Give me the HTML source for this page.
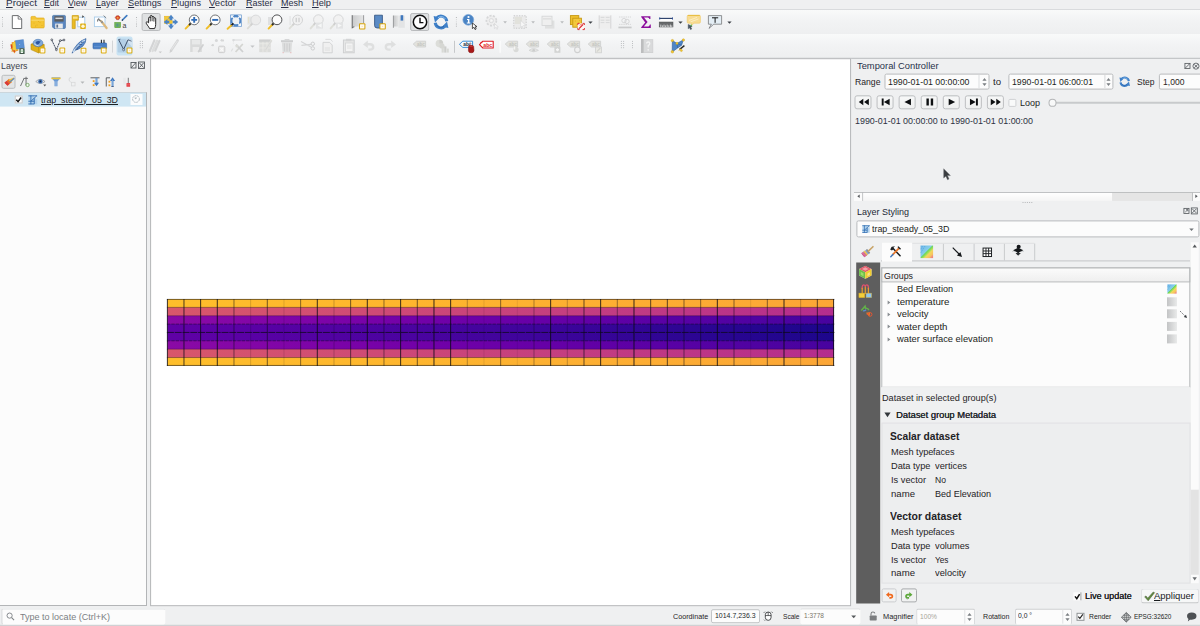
<!DOCTYPE html>
<html><head><meta charset="utf-8"><title>QGIS</title>
<style>
html,body{margin:0;padding:0;}
html{overflow:hidden;}
body{width:1200px;height:626px;overflow:hidden;position:relative;background:#eff0f1;font-family:"Liberation Sans",sans-serif;}
.t{position:absolute;white-space:nowrap;line-height:14px;height:14px;transform-origin:0 50%;}
.i{position:absolute;overflow:visible;}
u{text-decoration-thickness:0.8px;text-underline-offset:1px;}
</style></head><body>
<div style="position:absolute;left:0;top:0;transform:translate(0.00px,9.80px);width:1200.00px;height:24.20px;background:linear-gradient(180deg,#f9fafa,#f2f3f4 45%,#eeeff0);"></div>
<div style="position:absolute;left:0;top:0;transform:translate(0.00px,34.00px);width:1200.00px;height:23.80px;background:linear-gradient(180deg,#f9fafa,#f2f3f4 45%,#eeeff0);"></div>
<div style="position:absolute;left:0;top:0;transform:translate(0.00px,9.00px);width:1200.00px;height:0.90px;background:#d9dbdd;"></div>
<div style="position:absolute;left:0;top:0;transform:translate(0.00px,57.80px);width:1200.00px;height:1.00px;background:#babcbe;"></div>
<span class="t" style="left:5.5px;top:-4.0px;font-size:8.80px;color:#2a2f45;transform:scaleX(1.1319);"><u>P</u>roject</span>
<span class="t" style="left:43.5px;top:-4.0px;font-size:8.80px;color:#2a2f45;transform:scaleX(0.9892);"><u>E</u>dit</span>
<span class="t" style="left:67.5px;top:-4.0px;font-size:8.80px;color:#2a2f45;transform:scaleX(1.0045);"><u>V</u>iew</span>
<span class="t" style="left:95.5px;top:-4.0px;font-size:8.80px;color:#2a2f45;transform:scaleX(1.0222);"><u>L</u>ayer</span>
<span class="t" style="left:127.5px;top:-4.0px;font-size:8.80px;color:#2a2f45;transform:scaleX(1.0536);"><u>S</u>ettings</span>
<span class="t" style="left:170.5px;top:-4.0px;font-size:8.80px;color:#2a2f45;transform:scaleX(1.0395);"><u>P</u>lugins</span>
<span class="t" style="left:208.5px;top:-4.0px;font-size:8.80px;color:#2a2f45;transform:scaleX(1.0823);"><u>V</u>ector</span>
<span class="t" style="left:245.5px;top:-4.0px;font-size:8.80px;color:#2a2f45;transform:scaleX(1.0225);"><u>R</u>aster</span>
<span class="t" style="left:280.5px;top:-4.0px;font-size:8.80px;color:#2a2f45;transform:scaleX(1.0224);"><u>M</u>esh</span>
<span class="t" style="left:311.5px;top:-4.0px;font-size:8.80px;color:#2a2f45;transform:scaleX(1.0499);"><u>H</u>elp</span>
<div style="position:absolute;left:0;top:0;transform:translate(2.00px,17.00px);width:1.10px;height:1.10px;background:#b4b6b8;opacity:1;"></div>
<div style="position:absolute;left:0;top:0;transform:translate(2.00px,19.17px);width:1.10px;height:1.10px;background:#b4b6b8;opacity:0.45;"></div>
<div style="position:absolute;left:0;top:0;transform:translate(2.00px,21.34px);width:1.10px;height:1.10px;background:#b4b6b8;opacity:0.45;"></div>
<div style="position:absolute;left:0;top:0;transform:translate(2.00px,23.51px);width:1.10px;height:1.10px;background:#b4b6b8;opacity:1;"></div>
<div style="position:absolute;left:0;top:0;transform:translate(2.00px,25.68px);width:1.10px;height:1.10px;background:#b4b6b8;opacity:1;"></div>
<div style="position:absolute;left:0;top:0;transform:translate(2.00px,40.90px);width:1.10px;height:1.10px;background:#bdbfc1;"></div>
<div style="position:absolute;left:0;top:0;transform:translate(2.00px,43.00px);width:1.10px;height:1.10px;background:#bdbfc1;"></div>
<div style="position:absolute;left:0;top:0;transform:translate(2.00px,45.10px);width:1.10px;height:1.10px;background:#bdbfc1;"></div>
<div style="position:absolute;left:0;top:0;transform:translate(2.00px,47.20px);width:1.10px;height:1.10px;background:#bdbfc1;"></div>
<div style="position:absolute;left:0;top:0;transform:translate(141.60px,13.00px);width:19.30px;height:18.20px;background:#dfe1e2;border:0.8px solid #b9bbbd;border-radius:2px;box-sizing:border-box;"></div>
<div style="position:absolute;left:0;top:0;transform:translate(410.20px,13.00px);width:19.40px;height:18.20px;background:#dfe1e2;border:0.8px solid #b9bbbd;border-radius:2px;box-sizing:border-box;"></div>
<div style="position:absolute;left:0;top:0;transform:translate(116.50px,36.50px);width:16.00px;height:18.50px;background:#c9e3f3;border-radius:2px;"></div>
<svg class="i" style="left:9.0px;top:13.7px;" width="16" height="16" viewBox="0 0 16 16"><path d="M3.3 1.6H9.4L12.7 4.9V14.5H3.3Z" fill="#fff" stroke="#6b6d6f" stroke-width="1"/><path d="M9.2 1.8V5.1H12.5" fill="none" stroke="#6b6d6f" stroke-width="0.9"/></svg>
<svg class="i" style="left:29.5px;top:13.7px;" width="16" height="16" viewBox="0 0 16 16"><path d="M1 3.3Q1 2.4 1.9 2.4H5.2L6.4 4H13.4Q14.2 4 14.2 4.8V13Q14.2 13.9 13.4 13.9H1.9Q1 13.9 1 13Z" fill="#f4c534" stroke="#e3ad1e" stroke-width="0.7"/><path d="M1.3 6.2H14" stroke="#f9dc7a" stroke-width="0.9"/><g fill="#e2a91c"><circle cx="4" cy="9" r=".5"/><circle cx="7" cy="11" r=".5"/><circle cx="10" cy="8.5" r=".5"/><circle cx="12" cy="11.5" r=".5"/><circle cx="5.5" cy="12" r=".5"/><circle cx="8.5" cy="7.5" r=".5"/></g></svg>
<svg class="i" style="left:50.5px;top:13.7px;" width="16" height="16" viewBox="0 0 16 16"><path d="M1.6 2.3Q1.6 1.4 2.5 1.4H13.4Q14.4 1.4 14.4 2.3V13.6Q14.4 14.5 13.4 14.5H3L1.6 13.1Z" fill="#5c88c2" stroke="#44709f" stroke-width="0.7"/><rect x="3.4" y="2.2" width="9.2" height="5.4" fill="#5b5d5f"/><rect x="4.4" y="3.6" width="7.2" height="1.5" fill="#d9dadb"/><rect x="4.2" y="9.6" width="7.6" height="4.9" fill="#e9eaeb"/><rect x="5.4" y="10.6" width="1.7" height="3" fill="#5b6f8c"/></svg>
<svg class="i" style="left:71.0px;top:13.7px;" width="16" height="16" viewBox="0 0 16 16"><rect x="6.8" y="3.2" width="7" height="9.6" fill="#fff" stroke="#9fc3e4" stroke-width="0.8"/><path d="M1.2 1.6H7.4V6.2H4.2V14.6H1.2Z" fill="#ebbb22" stroke="#c7990e" stroke-width="0.7"/><rect x="2" y="2.6" width="4.6" height="2.2" fill="#f8de86"/><path d="M11.2 1.2L13.2 2.6L11.2 4Z" fill="#4a4c4e"/><rect x="9.2" y="9.4" width="5.6" height="5.6" rx="0.8" fill="#e0b116"/><circle cx="12" cy="12.2" r="1.7" fill="#fff6d8"/></svg>
<svg class="i" style="left:93.0px;top:13.7px;" width="16" height="16" viewBox="0 0 16 16"><rect x="1.4" y="3" width="10.6" height="9.6" fill="#fdfeff" stroke="#a9cdea" stroke-width="0.9"/><path d="M5.2 5.2L8.6 7.6" stroke="#777a7c" stroke-width="1.6"/><path d="M4.6 7.6Q3.8 5.2 6.2 4.4" fill="none" stroke="#777a7c" stroke-width="1"/><path d="M8.4 7.4L13.6 14" stroke="#dcb87c" stroke-width="2.3" stroke-linecap="round"/><path d="M8.4 7.4L9.6 8.9" stroke="#8e9092" stroke-width="2"/><path d="M10.6 1.6L13.2 4" stroke="#55585a" stroke-width="0.7"/></svg>
<svg class="i" style="left:112.5px;top:13.7px;" width="16" height="16" viewBox="0 0 16 16"><path d="M2.2 3.6L3.6 1.8H5.8L7.2 3.6L5.8 5.6H3.6Z" fill="#d8442c" stroke="#a8301c" stroke-width="0.5"/><circle cx="4.7" cy="3.7" r="1" fill="#f2a23a"/><path d="M9.4 6L13.8 1.6" stroke="#3f7cc2" stroke-width="1.7" stroke-linecap="round"/><path d="M9 6.6L9.8 5.6" stroke="#2b3a55" stroke-width="1.2"/><rect x="1.8" y="8.6" width="5.6" height="5" fill="#7fc04a" stroke="#4d9a2c" stroke-width="0.6"/><path d="M3.2 9.4V12.8M4.6 9.4V12.8M6 9.4V12.8" stroke="#3f7fae" stroke-width="0.7"/><text x="9.6" y="13.6" font-family="Liberation Sans,sans-serif" font-size="7" fill="#3c3e40">a</text></svg>
<svg class="i" style="left:143.6px;top:13.7px;" width="16" height="16" viewBox="0 0 16 16"><path d="M4.6 8.8V4.2Q4.6 3.2 5.5 3.2Q6.3 3.2 6.3 4.2V2.4Q6.3 1.4 7.2 1.4Q8.1 1.4 8.1 2.4V3.2Q8.1 2.4 9 2.4Q9.9 2.4 9.9 3.4V4.4Q9.9 3.7 10.8 3.7Q11.7 3.7 11.7 4.8V10.4Q11.7 12.6 10.6 14.6H5.6Q4.8 12.8 3.4 11.2L2.2 9.2Q1.8 8.2 2.7 7.9Q3.4 7.7 4 8.4Z" fill="#fff" stroke="#1a1a1a" stroke-width="0.95" stroke-linejoin="round"/><path d="M6.3 4.2V7.4M8.1 3.2V7.2M9.9 4.4V7.6" stroke="#1a1a1a" stroke-width="0.8"/></svg>
<svg class="i" style="left:163.0px;top:13.7px;" width="16" height="16" viewBox="0 0 16 16"><rect x="1.4" y="2.2" width="7.4" height="7.4" fill="#f5c936" stroke="#dfb226" stroke-width="0.5"/><g fill="#4b84c6"><path d="M8 0.8L11 4.4H9.3V6.6H6.7V4.4H5Z"/><path d="M8 15.2L11 11.6H9.3V9.4H6.7V11.6H5Z"/><path d="M0.8 8L4.4 5V6.7H6.6V9.3H4.4V11Z"/><path d="M15.2 8L11.6 5V6.7H9.4V9.3H11.6V11Z"/></g><rect x="6.5" y="6.5" width="3" height="3" fill="#f5c936"/></svg>
<svg class="i" style="left:184.0px;top:13.7px;" width="16" height="16" viewBox="0 0 16 16"><path d="M5.63 10.52L1.60 14.60" stroke="#f0be28" stroke-width="1.9" stroke-linecap="round"/><path d="M6.76 9.38L5.63 10.52" stroke="#2b2b2b" stroke-width="1.9" stroke-linecap="round"/><circle cx="10.2" cy="5.9" r="4.9" fill="#fdfdfd" stroke="#626466" stroke-width="0.9"/><path d="M10.2 3V8.8M7.3 5.9H13.1" stroke="#2f6cb8" stroke-width="1.9"/></svg>
<svg class="i" style="left:204.5px;top:13.7px;" width="16" height="16" viewBox="0 0 16 16"><path d="M5.63 10.52L1.60 14.60" stroke="#f0be28" stroke-width="1.9" stroke-linecap="round"/><path d="M6.76 9.38L5.63 10.52" stroke="#2b2b2b" stroke-width="1.9" stroke-linecap="round"/><circle cx="10.2" cy="5.9" r="4.9" fill="#fdfdfd" stroke="#626466" stroke-width="0.9"/><path d="M7.2 5.9H13.2" stroke="#2f6cb8" stroke-width="1.9"/></svg>
<svg class="i" style="left:225.5px;top:13.7px;" width="16" height="16" viewBox="0 0 16 16"><rect x="4.2" y="0.6" width="11.4" height="12.2" fill="#4f86c6"/><circle cx="9.9" cy="6.7" r="3.5" fill="#eef1f4"/><path d="M4.8 1.2H8.2L4.8 4.6ZM15 1.2V4.6L11.6 1.2ZM15 12.2H11.6L15 8.8ZM4.8 12.2V8.8L8.2 12.2Z" fill="#f4f7fb"/><path d="M6 2.4L8 4.4M13.8 2.4L11.8 4.4M13.8 11L11.8 9" stroke="#f4f7fb" stroke-width="1.3"/><path d="M6.8 9.9L5.4 11.3" stroke="#1e1e1e" stroke-width="1.9" stroke-linecap="round"/><path d="M5 11.7L1.6 14.8" stroke="#f0be28" stroke-width="1.9" stroke-linecap="round"/></svg>
<svg class="i" style="left:246.0px;top:13.7px;" width="16" height="16" viewBox="0 0 16 16"><rect x="1.4" y="2.6" width="5" height="8" fill="#e3e4e4"/><path d="M2 4h1M2 6h1M2 8h1" stroke="#e8dfb0" stroke-width="0.9"/><path d="M5.32 10.71L1.80 14.40" stroke="#dcdcd8" stroke-width="1.9" stroke-linecap="round"/><path d="M6.42 9.55L5.32 10.71" stroke="#d0d0d0" stroke-width="1.9" stroke-linecap="round"/><circle cx="9.8" cy="6" r="4.9" fill="#ececec" stroke="#d6d7d8" stroke-width="0.9"/></svg>
<svg class="i" style="left:266.5px;top:13.7px;" width="16" height="16" viewBox="0 0 16 16"><rect x="1" y="3" width="6" height="8" fill="#dfe0e1"/><path d="M5.51 10.50L1.60 14.60" stroke="#f0be28" stroke-width="1.9" stroke-linecap="round"/><path d="M6.62 9.34L5.51 10.50" stroke="#2b2b2b" stroke-width="1.9" stroke-linecap="round"/><circle cx="10" cy="5.8" r="4.9" fill="#fcfcfc" stroke="#48494b" stroke-width="0.95"/></svg>
<svg class="i" style="left:287.5px;top:13.7px;" width="16" height="16" viewBox="0 0 16 16"><path d="M5.12 10.71L1.60 14.40" stroke="#dedfd9" stroke-width="1.9" stroke-linecap="round"/><path d="M6.22 9.55L5.12 10.71" stroke="#cfcfcf" stroke-width="1.9" stroke-linecap="round"/><circle cx="9.6" cy="6" r="4.9" fill="#f1f1f1" stroke="#cfd0d1" stroke-width="0.9"/><path d="M8.2 3.8V8.2M11 3.8V8.2" stroke="#c3c4c5" stroke-width="1"/><rect x="1.6" y="2" width="0.9" height="9" fill="#dedfdf"/></svg>
<svg class="i" style="left:308.5px;top:13.7px;" width="16" height="16" viewBox="0 0 16 16"><path d="M5.15 10.39L1.60 14.40" stroke="#dedfd9" stroke-width="1.9" stroke-linecap="round"/><path d="M6.22 9.19L5.15 10.39" stroke="#cfcfcf" stroke-width="1.9" stroke-linecap="round"/><circle cx="9.4" cy="5.6" r="4.8" fill="#f2f2f2" stroke="#d3d4d5" stroke-width="0.9"/><rect x="7" y="8.6" width="7" height="6" fill="#e2e3e4"/><path d="M12.6 9.4V13.8L8.6 11.6Z" fill="#f6f7f7"/></svg>
<svg class="i" style="left:329.0px;top:13.7px;" width="16" height="16" viewBox="0 0 16 16"><path d="M5.15 10.39L1.60 14.40" stroke="#dedfd9" stroke-width="1.9" stroke-linecap="round"/><path d="M6.22 9.19L5.15 10.39" stroke="#cfcfcf" stroke-width="1.9" stroke-linecap="round"/><circle cx="9.4" cy="5.6" r="4.8" fill="#f2f2f2" stroke="#d3d4d5" stroke-width="0.9"/><rect x="7" y="8.6" width="7" height="6" fill="#e2e3e4"/><path d="M8.8 9.4V13.8L12.8 11.6Z" fill="#f6f7f7"/></svg>
<svg class="i" style="left:350.0px;top:13.7px;" width="16" height="16" viewBox="0 0 16 16"><defs><linearGradient id="nbg" x1="0" x2="1"><stop offset="0" stop-color="#c9cacb"/><stop offset="1" stop-color="#e6e7e7"/></linearGradient></defs><path d="M2 1.2H13.6V12.6H4.2Q2 12.6 2 14.2Z" fill="url(#nbg)"/><path d="M2.2 1.2V14.2Q2.4 12.8 4.4 12.8" fill="none" stroke="#5c5e60" stroke-width="0.9"/><path d="M13.6 1.2V9" stroke="#77797b" stroke-width="0.7"/><rect x="9" y="9.2" width="6.4" height="6.4" rx="1" fill="#d4a40e"/><rect x="10" y="10.2" width="4.4" height="4.4" rx="0.3" fill="#fffaf0"/><circle cx="12.2" cy="12.4" r="0.7" fill="#fbe6b8"/></svg>
<svg class="i" style="left:371.0px;top:13.7px;" width="16" height="16" viewBox="0 0 16 16"><path d="M3.6 1.2H11.4V11.2L10 14H6.2Q3.6 14 3.6 11.6Z" fill="#5a8bc5" stroke="#2b4d7c" stroke-width="0.8"/><rect x="8.4" y="9.2" width="6.4" height="6.4" rx="1" fill="#d4a40e"/><rect x="9.4" y="10.2" width="4.4" height="4.4" rx="0.3" fill="#fffaf0"/><circle cx="11.6" cy="12.4" r="0.7" fill="#fbe6b8"/></svg>
<svg class="i" style="left:391.0px;top:13.7px;" width="16" height="16" viewBox="0 0 16 16"><defs><linearGradient id="m3g" x1="0" x2="1"><stop offset="0" stop-color="#c4c5c6"/><stop offset="1" stop-color="#e5e6e6"/></linearGradient></defs><path d="M2.2 1.6H7.4V12.4H3.6Q2.2 12.4 2.2 13.8Z" fill="url(#m3g)"/><rect x="7.4" y="1.6" width="6.4" height="12.2" fill="#e3e4e5"/><path d="M2.4 1.6V13.8" stroke="#8c8e90" stroke-width="0.8"/><rect x="9.6" y="1.2" width="2.6" height="5.4" fill="#3f78bd"/></svg>
<svg class="i" style="left:411.7px;top:13.7px;" width="16" height="16" viewBox="0 0 16 16"><circle cx="8" cy="8" r="6.7" fill="#fff" stroke="#0d0d0d" stroke-width="1.5"/><path d="M8 3.8V8.6H11.4" fill="none" stroke="#0d0d0d" stroke-width="1.4"/></svg>
<svg class="i" style="left:432.5px;top:13.7px;" width="16" height="16" viewBox="0 0 16 16"><path d="M13.8 7.2A5.8 5.8 0 0 0 3.6 4.2" fill="none" stroke="#3f80c8" stroke-width="3"/><path d="M0.6 2L6.8 3.2L2 8.4Z" fill="#3f80c8"/><path d="M2.2 8.8A5.8 5.8 0 0 0 12.4 11.8" fill="none" stroke="#3f80c8" stroke-width="3"/><path d="M15.4 14L9.2 12.8L14 7.6Z" fill="#3f80c8"/><path d="M12.4 5A4.8 4.8 0 0 0 5 3.8" fill="none" stroke="#8fc1ee" stroke-width="0.9"/><path d="M3.6 11A4.8 4.8 0 0 0 11 12.2" fill="none" stroke="#2a62a8" stroke-width="0.8"/></svg>
<svg class="i" style="left:462.0px;top:13.7px;" width="16" height="16" viewBox="0 0 16 16"><circle cx="6.3" cy="5.8" r="5.4" fill="#4a84c4" stroke="#7aa6d8" stroke-width="0.7"/><circle cx="6.5" cy="3" r="1.1" fill="#fff"/><path d="M5 5H7.4V8.6H8.4V9.5H4.8V8.6H5.9V5.9H5Z" fill="#fff"/><path d="M10.4 9V14.6L11.9 13.3L13.1 15.6L14.2 15L13 12.9L15 12.7Z" fill="#fff" stroke="#1a1a1a" stroke-width="0.75"/></svg>
<svg class="i" style="left:483.5px;top:13.7px;" width="16" height="16" viewBox="0 0 16 16"><circle cx="7.4" cy="6.6" r="5" fill="#eeeeee" stroke="#d6d7d8" stroke-width="1.7" stroke-dasharray="2.1 1.4"/><circle cx="7.4" cy="6.6" r="2.1" fill="none" stroke="#d9dadb" stroke-width="0.9"/><path d="M6.6 5.2V8L8.8 6.6Z" fill="#f8f8f8"/><path d="M10.4 9.6V14.6L11.7 13.5L12.8 15.4L13.7 14.9L12.7 13.1L14.4 12.9Z" fill="#f5f5f5" stroke="#d3d4d5" stroke-width="0.6"/></svg>
<svg class="i" style="left:512.0px;top:13.7px;" width="16" height="16" viewBox="0 0 16 16"><rect x="1.8" y="1.8" width="12.4" height="12.4" fill="#ebebeb" stroke="#c7c8c9" stroke-width="1" stroke-dasharray="1.3 1.3"/><rect x="3" y="3" width="7" height="7" fill="#e2e2dc"/><path d="M8.6 6.4V13.4L10.2 12L11.6 14.6L12.9 13.9L11.5 11.5L13.8 11.2Z" fill="#f7f7f7" stroke="#d4d5d6" stroke-width="0.6"/></svg>
<svg class="i" style="left:540.0px;top:13.7px;" width="16" height="16" viewBox="0 0 16 16"><rect x="5" y="6.6" width="9.4" height="8" fill="#dfe0e0"/><rect x="2" y="2.2" width="10" height="9.4" fill="#efefef" stroke="#d3d4d5" stroke-width="0.8"/><rect x="3" y="4.2" width="8" height="1.3" fill="#dcdddd"/></svg>
<svg class="i" style="left:568.5px;top:13.7px;" width="16" height="16" viewBox="0 0 16 16"><rect x="1.4" y="1.6" width="8.4" height="9" fill="#efc02c" stroke="#c59710" stroke-width="0.9"/><rect x="3.8" y="4.2" width="8.6" height="9" fill="#f3c83c" stroke="#c59710" stroke-width="0.9"/><g fill="#e4a91a"><circle cx="6.4" cy="7" r=".5"/><circle cx="9.6" cy="9" r=".5"/><circle cx="7.4" cy="11" r=".5"/><circle cx="10.6" cy="6.2" r=".5"/></g><rect x="8.8" y="9.4" width="6.6" height="6.2" fill="#fff6f4"/><path d="M8.8 11V9.4H10.6M13.6 9.4H15.4V11M15.4 14V15.6H13.6M10.6 15.6H8.8V14" fill="none" stroke="#d8262a" stroke-width="0.9"/><path d="M10 14.6L14.2 10.4" stroke="#d8262a" stroke-width="1.3"/><path d="M10.6 11.2Q12 10 13.4 11.2" stroke="#e8605c" stroke-width="0.8" fill="none"/></svg>
<svg class="i" style="left:596.5px;top:13.7px;" width="16" height="16" viewBox="0 0 16 16"><rect x="1.8" y="1.6" width="12.4" height="12.8" fill="#eeeeee"/><path d="M2.2 1.4V14.6M13.8 1.4V14.6" stroke="#d2d3d4" stroke-width="0.9"/><path d="M3.6 3.4H7.4M8.8 3.4H12.6M3.6 6.2H7.4M8.8 6.2H12.6M3.6 8.6H7.4M8.8 8.6H12.6" stroke="#d2d3d4" stroke-width="0.8"/></svg>
<svg class="i" style="left:617.0px;top:13.7px;" width="16" height="16" viewBox="0 0 16 16"><path d="M2 3H14M2 10.4H14" stroke="#d0d1d2" stroke-width="0.8" stroke-dasharray="1.4 0.8"/><circle cx="7" cy="6.6" r="2.2" fill="none" stroke="#d0d1d2" stroke-width="0.8"/><circle cx="10" cy="7.4" r="2.2" fill="none" stroke="#d0d1d2" stroke-width="0.8"/><rect x="1.4" y="12.6" width="13.2" height="1.7" fill="#c9cacb"/></svg>
<svg class="i" style="left:637.5px;top:13.7px;" width="16" height="16" viewBox="0 0 16 16"><path d="M3.2 2.2H12.4V5H11.4Q11.2 3.4 9.8 3.4H6L9.6 8L5.8 12.4H10.4Q11.6 12.4 11.9 10.6H12.8V14H3.2V13.2L7.2 8.4L3.2 3Z" fill="#8c0f9c"/></svg>
<svg class="i" style="left:658.0px;top:13.7px;" width="16" height="16" viewBox="0 0 16 16"><rect x="1.4" y="4.6" width="13.4" height="3.6" fill="#fdfdfd"/><path d="M1.4 4.4H14.8" stroke="#243a66" stroke-width="1.1"/><path d="M1.7 3.4V5.6M14.5 3.4V5.6" stroke="#2c4f9a" stroke-width="0.9"/><rect x="1.2" y="8" width="13.8" height="5" fill="#696b6d" stroke="#4e5052" stroke-width="0.5"/><path d="M2.8 10.6V13M4.4 11.4V13M6 10.6V13M7.6 11.4V13M9.2 10.6V13M10.8 11.4V13M12.4 10.6V13M13.8 11.4V13" stroke="#eeefef" stroke-width="0.8"/></svg>
<svg class="i" style="left:686.0px;top:13.7px;" width="16" height="16" viewBox="0 0 16 16"><path d="M2.4 1.2H13.2Q14.4 1.2 14.4 2.4V8Q14.4 9.2 13.2 9.2H8L5.4 11.6V9.2H2.4Q1.2 9.2 1.2 8V2.4Q1.2 1.2 2.4 1.2Z" fill="#f8dc92" stroke="#f0c765" stroke-width="0.6"/><path d="M1.8 1.5H13.8" stroke="#e6bc3c" stroke-width="0.9"/><path d="M3 6.4L11 3.4M4.6 7.8L12.4 5" stroke="#fcefc6" stroke-width="0.9"/><path d="M2.2 10.4L6.2 12.2L4.8 13.2L5.8 15L4.4 15.6L3.6 13.8L2.2 14.8Z" fill="#4c5863" stroke="#3c4650" stroke-width="0.4"/><circle cx="5.2" cy="11.4" r="0.8" fill="#5cb85c"/></svg>
<svg class="i" style="left:707.0px;top:13.7px;" width="16" height="16" viewBox="0 0 16 16"><path d="M1.4 1.6H14.6V10.2H6.8L2 14.4L4.4 10.2H1.4Z" fill="#e4eef5" stroke="#77797b" stroke-width="0.8" stroke-linejoin="round"/><path d="M5 3.8H11.2M8.1 3.8V8.8" stroke="#161616" stroke-width="1"/></svg>
<div style="position:absolute;left:0;top:0;transform:translate(136.00px,17.00px);width:1.10px;height:1.10px;background:#b4b6b8;opacity:1;"></div>
<div style="position:absolute;left:0;top:0;transform:translate(136.00px,19.17px);width:1.10px;height:1.10px;background:#b4b6b8;opacity:0.45;"></div>
<div style="position:absolute;left:0;top:0;transform:translate(136.00px,21.34px);width:1.10px;height:1.10px;background:#b4b6b8;opacity:0.45;"></div>
<div style="position:absolute;left:0;top:0;transform:translate(136.00px,23.51px);width:1.10px;height:1.10px;background:#b4b6b8;opacity:1;"></div>
<div style="position:absolute;left:0;top:0;transform:translate(136.00px,25.68px);width:1.10px;height:1.10px;background:#b4b6b8;opacity:1;"></div>
<div style="position:absolute;left:0;top:0;transform:translate(455.90px,17.00px);width:1.10px;height:1.10px;background:#b4b6b8;opacity:1;"></div>
<div style="position:absolute;left:0;top:0;transform:translate(455.90px,19.17px);width:1.10px;height:1.10px;background:#b4b6b8;opacity:0.45;"></div>
<div style="position:absolute;left:0;top:0;transform:translate(455.90px,21.34px);width:1.10px;height:1.10px;background:#b4b6b8;opacity:0.45;"></div>
<div style="position:absolute;left:0;top:0;transform:translate(455.90px,23.51px);width:1.10px;height:1.10px;background:#b4b6b8;opacity:1;"></div>
<div style="position:absolute;left:0;top:0;transform:translate(455.90px,25.68px);width:1.10px;height:1.10px;background:#b4b6b8;opacity:1;"></div>
<svg class="i" style="left:503.2px;top:20.7px" width="4.2" height="2.7" viewBox="0 0 6 4"><path d="M0.3 0.5H5.7L3 3.6Z" fill="#babcbe"/></svg>
<svg class="i" style="left:531.2px;top:20.7px" width="4.2" height="2.7" viewBox="0 0 6 4"><path d="M0.3 0.5H5.7L3 3.6Z" fill="#babcbe"/></svg>
<svg class="i" style="left:559.9px;top:20.7px" width="4.2" height="2.7" viewBox="0 0 6 4"><path d="M0.3 0.5H5.7L3 3.6Z" fill="#babcbe"/></svg>
<svg class="i" style="left:587.5px;top:20.6px" width="5" height="3.2" viewBox="0 0 6 4"><path d="M0.3 0.5H5.7L3 3.6Z" fill="#3a3f44"/></svg>
<svg class="i" style="left:677.5px;top:20.6px" width="5" height="3.2" viewBox="0 0 6 4"><path d="M0.3 0.5H5.7L3 3.6Z" fill="#3a3f44"/></svg>
<svg class="i" style="left:726.5px;top:20.6px" width="5" height="3.2" viewBox="0 0 6 4"><path d="M0.3 0.5H5.7L3 3.6Z" fill="#3a3f44"/></svg>
<svg class="i" style="left:9.0px;top:37.8px;" width="16" height="16" viewBox="0 0 16 16"><path d="M1.2 6.6L3 5.6L2.6 4.2L5 4L5.6 2.6L8 3.6L9.4 12.4L6.6 13.6L5.4 15.4L4.2 13.6L2.4 13.8L3 11.8L1.4 10.8L2.6 9.2Z" fill="#e8942a"/><path d="M3.6 5L6 3.4L8.4 4L9.2 11.6L6.2 12.8L4 11.4Z" fill="#f5cf3c"/><path d="M1.6 7.4L3 6.6L3.4 9.6L2.2 10.4ZM4 13L5.6 12L6.2 14.4Z" fill="#d8432a"/><path d="M6.4 2.6L14.4 1.6L15.4 10L7.4 11.2Z" fill="#5b90d2" stroke="#4a7cc0" stroke-width="0.4"/><circle cx="10.6" cy="6.6" r="0.5" fill="#a9c6ea"/><rect x="10.4" y="10.2" width="5.2" height="5.8" rx="0.5" fill="#41584a"/><rect x="11.7" y="11.2" width="2.4" height="3.8" fill="#f4faf4"/><path d="M10.8 13.1H15.2" stroke="#6fae72" stroke-width="0.7"/></svg>
<svg class="i" style="left:29.5px;top:37.8px;" width="16" height="16" viewBox="0 0 16 16"><path d="M1 6.2L6 4.4L14.2 6.6V12.2L8.6 15L1 11.6Z" fill="#e0b01a" stroke="#b98d0c" stroke-width="0.6"/><path d="M1 6.2L8.6 9V15" fill="none" stroke="#b98d0c" stroke-width="0.6"/><path d="M8.6 9L14.2 6.6" stroke="#b98d0c" stroke-width="0.6"/><ellipse cx="8" cy="5" rx="4.9" ry="3.7" fill="#7fa9da" stroke="#4a78b4" stroke-width="0.6"/><path d="M5.6 4.2Q8 2 10.6 3.6Q9.4 6.6 6.8 6.8Z" fill="#2c55a0"/><path d="M4.2 5.6Q6 7.6 8.6 7.8" stroke="#d7e6f6" stroke-width="0.8" fill="none"/><rect x="9.6" y="9.6" width="5.8" height="5.8" rx="1" fill="#dcae14"/><rect x="10.6" y="10.6" width="3.8" height="3.8" rx="0.3" fill="#fffaf0"/><circle cx="12.5" cy="12.5" r="0.7" fill="#fbe6b8"/></svg>
<svg class="i" style="left:50.0px;top:37.8px;" width="16" height="16" viewBox="0 0 16 16"><path d="M1.6 1.8L6.4 11.8L10.2 2.6L14.2 2" fill="none" stroke="#263248" stroke-width="0.85" stroke-dasharray="2.2 0.5"/><g fill="#fff" stroke="#2c3440" stroke-width="0.7"><circle cx="1.8" cy="1.8" r="0.9"/><circle cx="6.4" cy="11.8" r="0.9"/><circle cx="10.2" cy="2.6" r="0.9"/><circle cx="14" cy="2" r="0.9"/></g><rect x="9.4" y="9.6" width="5.8" height="5.8" rx="1" fill="#dcae14"/><rect x="10.4" y="10.6" width="3.8" height="3.8" rx="0.3" fill="#fffaf0"/><circle cx="12.3" cy="12.5" r="0.7" fill="#fbe6b8"/></svg>
<svg class="i" style="left:70.8px;top:37.8px;" width="16" height="16" viewBox="0 0 16 16"><path d="M1 15.2Q2.8 10 6.6 6Q10.6 2 15 0.6Q15.2 4.6 12 8Q8.6 11.2 4 12.4Z" fill="#5a8ccc" stroke="#2a5694" stroke-width="0.6"/><path d="M2 14Q6 8 13.8 2" fill="none" stroke="#cfe2f6" stroke-width="1.1"/><path d="M5.6 9.4L9 8.6M7.6 7L11 6.2M9.8 4.8L13 4M4.2 11.2L7 10.8" stroke="#1f3f72" stroke-width="0.7"/><path d="M9 3.4L10 6M11.4 2.2L12 4.6M6.8 5.6L7.8 8" stroke="#a9c9ec" stroke-width="0.6"/><rect x="9.6" y="9.8" width="5.8" height="5.8" rx="1" fill="#dcae14"/><rect x="10.6" y="10.8" width="3.8" height="3.8" rx="0.3" fill="#fffaf0"/><circle cx="12.5" cy="12.7" r="0.7" fill="#fbe6b8"/></svg>
<svg class="i" style="left:92.0px;top:37.8px;" width="16" height="16" viewBox="0 0 16 16"><rect x="1" y="5" width="13.6" height="5.8" rx="0.8" fill="#4a80c6" stroke="#2f62a8" stroke-width="0.6"/><path d="M2.4 8.6H10" stroke="#7fa8dc" stroke-width="0.8" stroke-dasharray="1.2 0.8"/><path d="M9.4 1.8V5M12 1.8V5" stroke="#20262e" stroke-width="1.1"/><rect x="8.8" y="9.6" width="5.8" height="5.8" rx="1" fill="#dcae14"/><rect x="9.8" y="10.6" width="3.8" height="3.8" rx="0.3" fill="#fffaf0"/><circle cx="11.7" cy="12.5" r="0.7" fill="#fbe6b8"/></svg>
<svg class="i" style="left:116.5px;top:37.8px;" width="16" height="16" viewBox="0 0 16 16"><rect x="0.6" y="0.8" width="14.6" height="13.8" rx="1" fill="#b4d0e6"/><path d="M8.6 1.4H15V9L8.6 1.4Z" fill="#d3e3f0"/><path d="M1.6 1.6L6.6 11.4L11 1.8" fill="none" stroke="#2f3f58" stroke-width="0.9"/><path d="M11 1.8L14.6 3.2M1.6 1.6L3.4 1.2" stroke="#2f3f58" stroke-width="0.7"/><circle cx="6.6" cy="11.8" r="1" fill="#e9f1f8" stroke="#2f3f58" stroke-width="0.6"/><rect x="9.6" y="9.6" width="5.8" height="5.8" rx="1" fill="#dcae14"/><rect x="10.6" y="10.6" width="3.8" height="3.8" rx="0.3" fill="#fffaf0"/><circle cx="12.5" cy="12.5" r="0.7" fill="#fbe6b8"/></svg>
<svg class="i" style="left:147.0px;top:37.8px;" width="16" height="16" viewBox="0 0 16 16"><path d="M3 12.6L7.4 2.4" stroke="#d3d4d5" stroke-width="2.2" stroke-linecap="round"/><path d="M5.6 13L10 2.8" stroke="#dcdddd" stroke-width="2.2" stroke-linecap="round"/><path d="M8.2 12.6L12.4 3" stroke="#d3d4d5" stroke-width="2.2" stroke-linecap="round"/><path d="M2.2 15L3 12.4L4.4 13.2Z" fill="#d3d4d5"/><path d="M11.6 13.4H15L13.3 15.2Z" fill="#c9cacb"/></svg>
<svg class="i" style="left:167.0px;top:37.8px;" width="16" height="16" viewBox="0 0 16 16"><path d="M4 12.6L10.6 2.6" stroke="#d6d7d8" stroke-width="2.6" stroke-linecap="round"/><path d="M2.4 15.2L3.4 11.8L5.4 13Z" fill="#d0d1d2"/><path d="M4.6 11.2L10.2 3.2" stroke="#ececec" stroke-width="0.7" stroke-linecap="round"/></svg>
<svg class="i" style="left:188.5px;top:37.8px;" width="16" height="16" viewBox="0 0 16 16"><rect x="1.2" y="1" width="11.6" height="13" fill="#d9dada"/><rect x="3" y="1.8" width="8" height="4.6" fill="#e8e9e9"/><rect x="3.6" y="9" width="6.4" height="5" fill="#ececec"/><path d="M9.6 13.6L14 7" stroke="#cfd0d1" stroke-width="1.8" stroke-linecap="round"/></svg>
<svg class="i" style="left:209.5px;top:37.8px;" width="16" height="16" viewBox="0 0 16 16"><circle cx="6.4" cy="2.6" r="1.5" fill="#d6d7d8"/><path d="M10 2.2L12.2 1V3.6ZM0.8 7.2L3.2 5.8V8.6Z" fill="#d0d1d2"/><rect x="11" y="1.6" width="3" height="1.8" fill="#d6d7d8"/><rect x="2.4" y="6.4" width="1.6" height="1.6" fill="#d6d7d8"/><rect x="8.6" y="8.2" width="6.2" height="6.4" rx="1.2" fill="#ebebeb" stroke="#c9cacb" stroke-width="0.9"/><path d="M10.4 10L13 12.8M13 10L10.4 12.8" stroke="#fafafa" stroke-width="1.1"/></svg>
<svg class="i" style="left:229.5px;top:37.8px;" width="16" height="16" viewBox="0 0 16 16"><path d="M3.4 2H12" stroke="#d2d3d4" stroke-width="0.8"/><path d="M2.6 1.2L4.2 2.8M4.2 1.2L2.6 2.8" stroke="#c6c7c8" stroke-width="0.7"/><path d="M3.4 3.4V5.4" stroke="#d2d3d4" stroke-width="0.7" stroke-dasharray="0.9 0.7"/><path d="M1.4 13.4L2.6 10.6" stroke="#d2d3d4" stroke-width="0.8"/><path d="M5.6 14L12.8 6" stroke="#d4d5d2" stroke-width="1.8"/><path d="M6 6.6L13 14" stroke="#cfd0d1" stroke-width="1.8"/><circle cx="7" cy="8" r="1.6" fill="#dadbd6"/></svg>
<svg class="i" style="left:258.0px;top:37.8px;" width="16" height="16" viewBox="0 0 16 16"><rect x="1.2" y="1.6" width="11.6" height="12.6" fill="#dcdddb"/><path d="M1.2 5.8H12.8M1.2 10H12.8M5 1.6V14.2M9 1.6V14.2" stroke="#ecece8" stroke-width="0.8"/><rect x="1.2" y="1.6" width="11.6" height="2.2" fill="#cfd0d0"/><path d="M7.6 12L13.2 3" stroke="#e2e2de" stroke-width="2.2" stroke-linecap="round"/><path d="M7.6 12L13.2 3" stroke="#cfd0d1" stroke-width="0.6" stroke-linecap="round"/></svg>
<svg class="i" style="left:278.5px;top:37.8px;" width="16" height="16" viewBox="0 0 16 16"><rect x="2" y="2.2" width="12" height="2" fill="#cdcecf"/><rect x="5.6" y="1" width="4.8" height="1.6" fill="#d6d7d8"/><path d="M2.8 4.2H13.2L12.4 14.6H3.6Z" fill="#dedfdf"/><path d="M5.4 5.4V13.4M8 5.4V13.4M10.6 5.4V13.4" stroke="#cbcccd" stroke-width="0.9"/><path d="M3.6 14.7h1.2M11.2 14.7h1.2" stroke="#e8a0a0" stroke-width="0.7"/></svg>
<svg class="i" style="left:299.5px;top:37.8px;" width="16" height="16" viewBox="0 0 16 16"><path d="M1 3.6L11.4 9.2M1.4 7.4L11.4 6.4" stroke="#d4d5d6" stroke-width="1.1"/><circle cx="12.8" cy="5.8" r="1.7" fill="none" stroke="#cdcecf" stroke-width="1"/><circle cx="12.8" cy="10.4" r="1.7" fill="none" stroke="#cdcecf" stroke-width="1"/></svg>
<svg class="i" style="left:319.5px;top:37.8px;" width="16" height="16" viewBox="0 0 16 16"><path d="M3 4.4H9.6L12.2 7V14.8H3Z" fill="#f0f0f0" stroke="#cfd0d1" stroke-width="0.9"/><path d="M5.4 1.4H10.4L12.8 3.6" fill="none" stroke="#d6d7d8" stroke-width="0.8"/><path d="M4.8 10H10M4.8 12H10" stroke="#d9dadb" stroke-width="0.8"/></svg>
<svg class="i" style="left:340.7px;top:37.8px;" width="16" height="16" viewBox="0 0 16 16"><rect x="2.4" y="2" width="10.8" height="12.8" fill="#e6e7e7" stroke="#cdcecf" stroke-width="0.9"/><rect x="5" y="0.8" width="5.4" height="2.4" fill="#d4d5d6"/><rect x="4.6" y="5" width="7.4" height="8.4" fill="#f3f3f3" stroke="#d2d3d4" stroke-width="0.7"/><path d="M6 8H10.6M6 10H10.6" stroke="#d9dadb" stroke-width="0.8"/></svg>
<svg class="i" style="left:361.0px;top:37.8px;" width="16" height="16" viewBox="0 0 16 16"><path d="M2 6.4L6.8 2.6V5H9Q13.4 5 13.4 9Q13.4 12.8 9 12.8H7.4V10.6H9Q11 10.6 11 9Q11 7.4 9 7.4H6.8V10Z" fill="#dedfdf"/></svg>
<svg class="i" style="left:382.0px;top:37.8px;" width="16" height="16" viewBox="0 0 16 16"><path d="M14 6.4L9.2 2.6V5H7Q2.6 5 2.6 9Q2.6 12.8 7 12.8H8.6V10.6H7Q5 10.6 5 9Q5 7.4 7 7.4H9.2V10Z" fill="#dedfdf"/></svg>
<svg class="i" style="left:412.0px;top:37.8px;" width="16" height="16" viewBox="0 0 16 16"><path d="M1.2 6.1L4.6 3.2H13.6V9H4.6Z" fill="#e2e2dd" stroke="#d0d1d1" stroke-width="0.9" stroke-linejoin="round"/><text x="5" y="7.5" font-family="Liberation Sans,sans-serif" font-size="5" font-weight="bold" fill="#c3c4c0" textLength="7.6" lengthAdjust="spacingAndGlyphs">abc</text></svg>
<svg class="i" style="left:433.5px;top:37.8px;" width="16" height="16" viewBox="0 0 16 16"><circle cx="5.4" cy="5.6" r="3.8" fill="#dcddd9"/><path d="M5.4 5.6V1.8A3.8 3.8 0 0 1 9.2 5.6Z" fill="#cfd0cc"/><circle cx="8" cy="8" r="2.6" fill="#d6d7d3"/><rect x="7.6" y="10" width="2.2" height="4.6" fill="#d8d9d5"/><rect x="10.2" y="8.4" width="2.2" height="6.2" fill="#cdcecb"/><rect x="12.8" y="10.6" width="2" height="4" fill="#d8d9d5"/></svg>
<svg class="i" style="left:458.5px;top:37.8px;" width="16" height="16" viewBox="0 0 16 16"><path d="M0.4 6.3L3.8 3.2H13.6V9.4H3.8Z" fill="#f7fbfe" stroke="#3b8fd8" stroke-width="1" stroke-linejoin="round"/><text x="4.2" y="7.9" font-family="Liberation Sans,sans-serif" font-size="5" font-weight="bold" fill="#25303c" textLength="8.4" lengthAdjust="spacingAndGlyphs">abc</text><path d="M11.2 4.2V8" stroke="#b8a0a8" stroke-width="1"/><path d="M9.6 8.4Q9.6 7.2 12 7.2Q14.6 7.2 14.6 8.4L15 12.4Q15 14.8 12.2 14.8Q9.4 14.8 9.4 12.4Z" fill="#a81818" stroke="#7c0c0c" stroke-width="0.5"/><ellipse cx="12.1" cy="8.3" rx="1.9" ry="0.7" fill="#c23a3a"/></svg>
<svg class="i" style="left:478.0px;top:37.8px;" width="16" height="16" viewBox="0 0 16 16"><path d="M1.5 6.6L4.9 3.2H15.2V10H4.9Z" fill="#fff" stroke="#e01c24" stroke-width="1.1" stroke-linejoin="round"/><text x="5.3" y="8.5" font-family="Liberation Sans,sans-serif" font-size="5" font-weight="bold" fill="#e01c24" textLength="8.9" lengthAdjust="spacingAndGlyphs">abc</text><path d="M2 5L5 3.6" stroke="#e01c24" stroke-width="0.7"/></svg>
<svg class="i" style="left:504.0px;top:37.8px;" width="16" height="16" viewBox="0 0 16 16"><path d="M1.2 6.1L4.6 3.2H13.6V9H4.6Z" fill="#e2e2dd" stroke="#d0d1d1" stroke-width="0.9" stroke-linejoin="round"/><text x="5" y="7.5" font-family="Liberation Sans,sans-serif" font-size="5" font-weight="bold" fill="#c3c4c0" textLength="7.6" lengthAdjust="spacingAndGlyphs">abc</text><circle cx="12" cy="11.6" r="2.6" fill="#d9dad8"/><path d="M10.6 8.4V11.6" stroke="#f4f4f2" stroke-width="1.3"/></svg>
<svg class="i" style="left:525.0px;top:37.8px;" width="16" height="16" viewBox="0 0 16 16"><path d="M1.2 6.1L4.6 3.2H13.6V9H4.6Z" fill="#e2e2dd" stroke="#d0d1d1" stroke-width="0.9" stroke-linejoin="round"/><text x="5" y="7.5" font-family="Liberation Sans,sans-serif" font-size="5" font-weight="bold" fill="#c3c4c0" textLength="7.6" lengthAdjust="spacingAndGlyphs">abc</text><path d="M4 12.4Q8.6 8.6 13.4 12.4Q8.6 15.4 4 12.4Z" fill="#e6e7e6" stroke="#cfd0d0" stroke-width="0.7"/><circle cx="8.7" cy="12.2" r="1.3" fill="#cbcccc"/></svg>
<svg class="i" style="left:545.5px;top:37.8px;" width="16" height="16" viewBox="0 0 16 16"><path d="M1.2 6.1L4.6 3.2H13.6V9H4.6Z" fill="#e2e2dd" stroke="#d0d1d1" stroke-width="0.9" stroke-linejoin="round"/><text x="5" y="7.5" font-family="Liberation Sans,sans-serif" font-size="5" font-weight="bold" fill="#c3c4c0" textLength="7.6" lengthAdjust="spacingAndGlyphs">abc</text><rect x="8.4" y="8.8" width="6" height="6" fill="#d3d4d3"/><path d="M10 11.8H13M11.5 10.3V13.3" stroke="#f6f6f6" stroke-width="1.4"/></svg>
<svg class="i" style="left:566.3px;top:37.8px;" width="16" height="16" viewBox="0 0 16 16"><path d="M1.2 6.1L4.6 3.2H13.6V9H4.6Z" fill="#e2e2dd" stroke="#d0d1d1" stroke-width="0.9" stroke-linejoin="round"/><text x="5" y="7.5" font-family="Liberation Sans,sans-serif" font-size="5" font-weight="bold" fill="#c3c4c0" textLength="7.6" lengthAdjust="spacingAndGlyphs">abc</text><circle cx="11.4" cy="11.8" r="2.8" fill="#f1f1f1" stroke="#cfd0d0" stroke-width="1.1"/></svg>
<svg class="i" style="left:587.0px;top:37.8px;" width="16" height="16" viewBox="0 0 16 16"><path d="M1.2 6.1L4.6 3.2H13.6V9H4.6Z" fill="#e2e2dd" stroke="#d0d1d1" stroke-width="0.9" stroke-linejoin="round"/><text x="5" y="7.5" font-family="Liberation Sans,sans-serif" font-size="5" font-weight="bold" fill="#c3c4c0" textLength="7.6" lengthAdjust="spacingAndGlyphs">abc</text><rect x="8.6" y="9" width="5.8" height="5.8" fill="#e9e9e4" stroke="#cfd0d0" stroke-width="0.8"/><path d="M9.8 13.6L13.4 10" stroke="#d3d4cf" stroke-width="1.2"/></svg>
<svg class="i" style="left:639.0px;top:37.8px;" width="16" height="16" viewBox="0 0 16 16"><rect x="2" y="1.2" width="12.2" height="13.8" fill="#cfd0d1"/><rect x="2" y="1.2" width="2.4" height="13.8" fill="#bcbdbe"/><rect x="5" y="2" width="8.6" height="12.2" fill="#d9dadb"/><path d="M7.6 5.6Q7.6 4 9.2 4Q10.8 4 10.8 5.6Q10.8 6.8 9.2 7.6V9.6" fill="none" stroke="#f2f3f3" stroke-width="1.3"/><circle cx="9.2" cy="11.8" r="0.9" fill="#f2f3f3"/></svg>
<svg class="i" style="left:670.0px;top:37.8px;" width="16" height="16" viewBox="0 0 16 16"><path d="M2.4 2.6L7 5.4L13.4 1.8L11.6 7.2L7.6 10L2.2 14Z" fill="#4f86c6" stroke="#2c5c9c" stroke-width="0.6"/><path d="M7 5.4L7.6 10M7 5.4L11.6 7.2" stroke="#2c5c9c" stroke-width="0.6"/><path d="M9.4 11.6L14.4 7.6" stroke="#2a2a2a" stroke-width="1.4"/><path d="M8 12.8L10.4 10.6L11.4 12Z" fill="#f0c030"/><g fill="#f4c832" stroke="#c89a10" stroke-width="0.4"><circle cx="2.4" cy="2.6" r="1.2"/><circle cx="7" cy="5.4" r="1.1"/><circle cx="13.4" cy="2" r="1.2"/><circle cx="2.4" cy="13.8" r="1.3"/><circle cx="11.4" cy="12.6" r="1"/></g></svg>
<div style="position:absolute;left:0;top:0;transform:translate(112.00px,40.60px);width:1.00px;height:12.40px;background:#d3d5d7;"></div>
<div style="position:absolute;left:0;top:0;transform:translate(454.00px,40.80px);width:1.00px;height:12.20px;background:#c6c8ca;"></div>
<div style="position:absolute;left:0;top:0;transform:translate(499.60px,40.80px);width:1.20px;height:12.20px;background:#ffffff;"></div>
<div style="position:absolute;left:0;top:0;transform:translate(139.80px,40.90px);width:1.10px;height:1.10px;background:#bdbfc1;"></div>
<div style="position:absolute;left:0;top:0;transform:translate(139.80px,43.00px);width:1.10px;height:1.10px;background:#bdbfc1;"></div>
<div style="position:absolute;left:0;top:0;transform:translate(139.80px,45.10px);width:1.10px;height:1.10px;background:#bdbfc1;"></div>
<div style="position:absolute;left:0;top:0;transform:translate(139.80px,47.20px);width:1.10px;height:1.10px;background:#bdbfc1;"></div>
<div style="position:absolute;left:0;top:0;transform:translate(142.00px,40.90px);width:1.10px;height:1.10px;background:#bdbfc1;"></div>
<div style="position:absolute;left:0;top:0;transform:translate(142.00px,43.00px);width:1.10px;height:1.10px;background:#bdbfc1;"></div>
<div style="position:absolute;left:0;top:0;transform:translate(142.00px,45.10px);width:1.10px;height:1.10px;background:#bdbfc1;"></div>
<div style="position:absolute;left:0;top:0;transform:translate(142.00px,47.20px);width:1.10px;height:1.10px;background:#bdbfc1;"></div>
<div style="position:absolute;left:0;top:0;transform:translate(620.90px,40.90px);width:1.10px;height:1.10px;background:#bdbfc1;"></div>
<div style="position:absolute;left:0;top:0;transform:translate(620.90px,43.00px);width:1.10px;height:1.10px;background:#bdbfc1;"></div>
<div style="position:absolute;left:0;top:0;transform:translate(620.90px,45.10px);width:1.10px;height:1.10px;background:#bdbfc1;"></div>
<div style="position:absolute;left:0;top:0;transform:translate(620.90px,47.20px);width:1.10px;height:1.10px;background:#bdbfc1;"></div>
<div style="position:absolute;left:0;top:0;transform:translate(623.10px,40.90px);width:1.10px;height:1.10px;background:#bdbfc1;"></div>
<div style="position:absolute;left:0;top:0;transform:translate(623.10px,43.00px);width:1.10px;height:1.10px;background:#bdbfc1;"></div>
<div style="position:absolute;left:0;top:0;transform:translate(623.10px,45.10px);width:1.10px;height:1.10px;background:#bdbfc1;"></div>
<div style="position:absolute;left:0;top:0;transform:translate(623.10px,47.20px);width:1.10px;height:1.10px;background:#bdbfc1;"></div>
<div style="position:absolute;left:0;top:0;transform:translate(632.00px,40.90px);width:1.10px;height:1.10px;background:#bdbfc1;"></div>
<div style="position:absolute;left:0;top:0;transform:translate(632.00px,43.00px);width:1.10px;height:1.10px;background:#bdbfc1;"></div>
<div style="position:absolute;left:0;top:0;transform:translate(632.00px,45.10px);width:1.10px;height:1.10px;background:#bdbfc1;"></div>
<div style="position:absolute;left:0;top:0;transform:translate(632.00px,47.20px);width:1.10px;height:1.10px;background:#bdbfc1;"></div>
<svg class="i" style="left:249.5px;top:44.7px" width="5" height="3.2" viewBox="0 0 6 4"><path d="M0.3 0.5H5.7L3 3.6Z" fill="#c2c4c6"/></svg>
<span class="t" style="left:1.0px;top:59.0px;font-size:8.80px;color:#3b3f4b;transform:scaleX(1.0034);">Layers</span>
<svg class="i" style="left:130px;top:61px" width="16" height="9" viewBox="0 0 16 9"><g fill="none" stroke="#555a5e" stroke-width="0.9"><rect x="1" y="1.5" width="5" height="5.5"/><path d="M1 7L6 1.5"/><rect x="8.5" y="1" width="6" height="6.5"/><path d="M9.5 2L13.5 6.5M13.5 2L9.5 6.5"/></g></svg>
<div style="position:absolute;left:0;top:0;transform:translate(1.50px,74.80px);width:14.00px;height:14.40px;background:#e3e5e6;border:0.8px solid #babcbe;border-radius:2px;box-sizing:border-box;"></div>
<svg class="i" style="left:2.5px;top:76.0px;" width="12" height="12" viewBox="0 0 16 16"><path d="M2 9L8 3.6L12 8L6 13Z" fill="#e86a2c"/><path d="M2 9L4.6 6.6L8.4 10.8L6 13Z" fill="#d83a3a"/><path d="M7 5L14.6 2L11 9Z" fill="#f3c23a"/><path d="M9 8L15 3" stroke="#5a86c0" stroke-width="1.6"/></svg>
<svg class="i" style="left:18.5px;top:76.0px;" width="12" height="12" viewBox="0 0 16 16"><path d="M2 13.4L6.8 3" stroke="#55585b" stroke-width="1.1"/><path d="M6.2 3.2H12" stroke="#55585b" stroke-width="1"/><path d="M9.4 1V12.6" stroke="#55585b" stroke-width="1.1"/><circle cx="11.4" cy="12" r="2.2" fill="#f1f7ee" stroke="#4d8e3a" stroke-width="0.9"/></svg>
<svg class="i" style="left:34.5px;top:76.0px;" width="12" height="12" viewBox="0 0 16 16"><path d="M1 7.4Q7 1.6 13.4 7.4Q7 12.6 1 7.4Z" fill="#e4e7ea" stroke="#8a8e92" stroke-width="0.9"/><circle cx="7.2" cy="7.2" r="2.9" fill="#3d6fb4"/><circle cx="7.2" cy="7.2" r="1.2" fill="#1a2a44"/><path d="M11 11.4H15L13 14Z" fill="#55585b"/></svg>
<svg class="i" style="left:49.5px;top:76.0px;" width="12" height="12" viewBox="0 0 16 16"><path d="M2.6 3.4H13.4L10 7.4V13.8H6V7.4Z" fill="#6a9ad6"/><path d="M8 7V14" stroke="#dbe8f6" stroke-width="0.7"/><rect x="1.8" y="2" width="12.4" height="2.2" rx="0.8" fill="#f0c838"/><path d="M2 2.2H14" stroke="#4a78b4" stroke-width="0.5"/></svg>
<svg class="i" style="left:64.5px;top:76.0px;" width="12" height="12" viewBox="0 0 16 16"><path d="M8.6 2.6Q6 0.8 5.4 4Q5 7 7.6 8" fill="none" stroke="#d3d4d5" stroke-width="1.2"/><rect x="8.6" y="8.4" width="4.8" height="4.8" fill="none" stroke="#d6d7d8" stroke-width="1"/></svg>
<svg class="i" style="left:89.0px;top:76.0px;" width="12" height="12" viewBox="0 0 16 16"><path d="M2 2.4H14" stroke="#3e4144" stroke-width="1.1"/><path d="M10 2.6V10" stroke="#4a84c8" stroke-width="2.4"/><path d="M6.6 9H13.4L10 13.8Z" fill="#3f78c0"/><path d="M10 3V9" stroke="#a9c8ec" stroke-width="0.7"/><rect x="5" y="5.6" width="2.4" height="2.4" fill="#f0a020"/><rect x="5" y="11" width="2.4" height="2.4" fill="#f0a020"/></svg>
<svg class="i" style="left:104.0px;top:76.0px;" width="12" height="12" viewBox="0 0 16 16"><path d="M3 14V2.4H8" fill="none" stroke="#3e4144" stroke-width="1.1"/><path d="M11.4 14V5.6" stroke="#4a84c8" stroke-width="2.4"/><path d="M8 6.6H14.8L11.4 1.6Z" fill="#3f78c0"/><path d="M11.4 5V13.4" stroke="#a9c8ec" stroke-width="0.7"/><path d="M9.8 14H13" stroke="#1f3a66" stroke-width="0.9"/><rect x="6" y="6.4" width="2.4" height="2.4" fill="#f0a020"/><rect x="6" y="11.2" width="2.4" height="2.4" fill="#f0a020"/></svg>
<svg class="i" style="left:122.0px;top:76.0px;" width="12" height="12" viewBox="0 0 16 16"><path d="M8.4 2.4V9.8" stroke="#3e4144" stroke-width="0.9"/><rect x="6" y="9.6" width="4.8" height="4.6" fill="#e0242c"/><path d="M6 11.9H10.8" stroke="#f8c8c8" stroke-width="0.7"/><rect x="1.6" y="2.4" width="3.6" height="9" fill="#e9eaeb"/></svg>
<svg class="i" style="left:80px;top:81px" width="5" height="3" viewBox="0 0 6 4"><path d="M0.3 0.5H5.7L3 3.6Z" fill="#b5b7b9"/></svg>
<div style="position:absolute;left:0;top:0;transform:translate(0.00px,92.00px);width:147.00px;height:513.80px;background:#fcfcfc;border-right:0.9px solid #b3b5b7;border-bottom:0.9px solid #b3b5b7;border-top:0.9px solid #c9cbcd;box-sizing:border-box;"></div>
<div style="position:absolute;left:0;top:0;transform:translate(0.00px,92.60px);width:146.20px;height:13.60px;background:#cfe6f3;"></div>
<div style="position:absolute;left:0;top:0;transform:translate(14.70px,95.50px);width:8.40px;height:8.20px;background:#fcfcfc;border:0.7px solid #c4c6c8;box-sizing:border-box;"></div>
<svg class="i" style="left:15.3px;top:96px" width="7.4" height="7.4" viewBox="0 0 7 7"><path d="M1.2 3.6L2.9 5.4L5.8 1.4" fill="none" stroke="#111" stroke-width="1.4"/></svg>
<svg class="i" style="left:27.7px;top:95.2px;" width="9.6" height="9.6" viewBox="0 0 16 16"><rect x="0.6" y="0.6" width="14.8" height="14.8" fill="#b5d5ee"/><path d="M8.6 0.8H15.2V7.4Z" fill="#d9e9f6"/><path d="M0.6 1.4H15.2M0.6 10.4H10.4M4.8 0.8V15.4M10.4 5.6V15.2M4.8 10.4L14.6 1.4M0.6 15H10.4" stroke="#2f6bb0" stroke-width="1.5" fill="none"/></svg>
<span class="t" style="left:41.0px;top:92.6px;font-size:8.80px;color:#1d2226;transform:scaleX(1.0025);text-decoration:underline;text-decoration-thickness:0.8px;text-underline-offset:1.2px;">trap_steady_05_3D</span>
<div style="position:absolute;left:0;top:0;transform:translate(130.50px,94.00px);width:11.50px;height:11.00px;background:#fbfcfd;"></div>
<svg class="i" style="left:132px;top:95.3px" width="8" height="8" viewBox="0 0 8 8"><circle cx="4" cy="4" r="3.4" fill="none" stroke="#9aa6ae" stroke-width="0.7" stroke-dasharray="2.2 0.6"/><path d="M4 2V4L2.6 3" fill="none" stroke="#9aa6ae" stroke-width="0.7"/></svg>
<div style="position:absolute;left:0;top:0;transform:translate(150.10px,58.20px);width:700.90px;height:547.60px;background:#ffffff;border:0.9px solid #b3b5b7;box-sizing:border-box;"></div>
<svg class="i" style="left:0;top:0" width="1200" height="626" viewBox="0 0 1200 626"><defs><linearGradient id="pg0" x1="0" x2="1" y1="0" y2="0"><stop offset="0.000" stop-color="#febe2b"/><stop offset="0.125" stop-color="#febb2c"/><stop offset="0.250" stop-color="#feb82d"/><stop offset="0.375" stop-color="#feb52e"/><stop offset="0.500" stop-color="#fdb230"/><stop offset="0.625" stop-color="#fdaf32"/><stop offset="0.750" stop-color="#fdac33"/><stop offset="0.875" stop-color="#fca935"/><stop offset="1.000" stop-color="#fca636"/></linearGradient><linearGradient id="pg1" x1="0" x2="1" y1="0" y2="0"><stop offset="0.000" stop-color="#d8576b"/><stop offset="0.125" stop-color="#d4526f"/><stop offset="0.250" stop-color="#d04d74"/><stop offset="0.375" stop-color="#cc4778"/><stop offset="0.500" stop-color="#c7427c"/><stop offset="0.625" stop-color="#c33d81"/><stop offset="0.750" stop-color="#be3885"/><stop offset="0.875" stop-color="#b93289"/><stop offset="1.000" stop-color="#b42d8e"/></linearGradient><linearGradient id="pg2" x1="0" x2="1" y1="0" y2="0"><stop offset="0.000" stop-color="#8a0aa5"/><stop offset="0.125" stop-color="#8306a7"/><stop offset="0.250" stop-color="#7b03a8"/><stop offset="0.375" stop-color="#7201a8"/><stop offset="0.500" stop-color="#6a00a8"/><stop offset="0.625" stop-color="#6200a6"/><stop offset="0.750" stop-color="#5901a5"/><stop offset="0.875" stop-color="#5002a2"/><stop offset="1.000" stop-color="#47039f"/></linearGradient><linearGradient id="pg3" x1="0" x2="1" y1="0" y2="0"><stop offset="0.000" stop-color="#6001a6"/><stop offset="0.125" stop-color="#5901a5"/><stop offset="0.250" stop-color="#5102a2"/><stop offset="0.375" stop-color="#4a03a0"/><stop offset="0.500" stop-color="#42049d"/><stop offset="0.625" stop-color="#390499"/><stop offset="0.750" stop-color="#2f0594"/><stop offset="0.875" stop-color="#260590"/><stop offset="1.000" stop-color="#1d068c"/></linearGradient></defs><rect x="167.30" y="299.00" width="666.70" height="9.36" fill="url(#pg0)"/><rect x="167.30" y="307.36" width="666.70" height="9.36" fill="url(#pg1)"/><rect x="167.30" y="315.73" width="666.70" height="9.36" fill="url(#pg2)"/><rect x="167.30" y="324.09" width="666.70" height="9.36" fill="url(#pg3)"/><rect x="167.30" y="332.45" width="666.70" height="9.36" fill="url(#pg3)"/><rect x="167.30" y="340.81" width="666.70" height="9.36" fill="url(#pg2)"/><rect x="167.30" y="349.17" width="666.70" height="9.36" fill="url(#pg1)"/><rect x="167.30" y="357.54" width="666.70" height="8.36" fill="url(#pg0)"/><line x1="167.40" y1="299.00" x2="167.40" y2="365.90" stroke="#0a0a14" stroke-width="0.9" stroke-opacity="0.90"/><line x1="183.97" y1="299.00" x2="183.97" y2="365.90" stroke="#0a0a14" stroke-width="0.9" stroke-opacity="0.81"/><line x1="200.64" y1="299.00" x2="200.64" y2="365.90" stroke="#0a0a14" stroke-width="0.9" stroke-opacity="0.90"/><line x1="217.30" y1="299.00" x2="217.30" y2="365.90" stroke="#0a0a14" stroke-width="0.9" stroke-opacity="0.90"/><line x1="233.97" y1="299.00" x2="233.97" y2="365.90" stroke="#0a0a14" stroke-width="0.9" stroke-opacity="0.54"/><line x1="250.64" y1="299.00" x2="250.64" y2="365.90" stroke="#0a0a14" stroke-width="0.9" stroke-opacity="0.18"/><line x1="267.31" y1="299.00" x2="267.31" y2="365.90" stroke="#0a0a14" stroke-width="0.9" stroke-opacity="0.63"/><line x1="283.97" y1="299.00" x2="283.97" y2="365.90" stroke="#0a0a14" stroke-width="0.9" stroke-opacity="0.14"/><line x1="300.64" y1="299.00" x2="300.64" y2="365.90" stroke="#0a0a14" stroke-width="0.9" stroke-opacity="0.54"/><line x1="317.31" y1="299.00" x2="317.31" y2="365.90" stroke="#0a0a14" stroke-width="0.9" stroke-opacity="0.90"/><line x1="333.98" y1="299.00" x2="333.98" y2="365.90" stroke="#0a0a14" stroke-width="0.9" stroke-opacity="0.23"/><line x1="350.64" y1="299.00" x2="350.64" y2="365.90" stroke="#0a0a14" stroke-width="0.9" stroke-opacity="0.63"/><line x1="367.31" y1="299.00" x2="367.31" y2="365.90" stroke="#0a0a14" stroke-width="0.9" stroke-opacity="0.90"/><line x1="383.98" y1="299.00" x2="383.98" y2="365.90" stroke="#0a0a14" stroke-width="0.9" stroke-opacity="0.50"/><line x1="400.64" y1="299.00" x2="400.64" y2="365.90" stroke="#0a0a14" stroke-width="0.9" stroke-opacity="0.90"/><line x1="417.31" y1="299.00" x2="417.31" y2="365.90" stroke="#0a0a14" stroke-width="0.9" stroke-opacity="0.63"/><line x1="433.98" y1="299.00" x2="433.98" y2="365.90" stroke="#0a0a14" stroke-width="0.9" stroke-opacity="0.90"/><line x1="450.65" y1="299.00" x2="450.65" y2="365.90" stroke="#0a0a14" stroke-width="0.9" stroke-opacity="0.90"/><line x1="467.31" y1="299.00" x2="467.31" y2="365.90" stroke="#0a0a14" stroke-width="0.9" stroke-opacity="0.32"/><line x1="483.98" y1="299.00" x2="483.98" y2="365.90" stroke="#0a0a14" stroke-width="0.9" stroke-opacity="0.11"/><line x1="500.65" y1="299.00" x2="500.65" y2="365.90" stroke="#0a0a14" stroke-width="0.9" stroke-opacity="0.54"/><line x1="517.32" y1="299.00" x2="517.32" y2="365.90" stroke="#0a0a14" stroke-width="0.9" stroke-opacity="0.09"/><line x1="533.99" y1="299.00" x2="533.99" y2="365.90" stroke="#0a0a14" stroke-width="0.9" stroke-opacity="0.36"/><line x1="550.65" y1="299.00" x2="550.65" y2="365.90" stroke="#0a0a14" stroke-width="0.9" stroke-opacity="0.90"/><line x1="567.32" y1="299.00" x2="567.32" y2="365.90" stroke="#0a0a14" stroke-width="0.9" stroke-opacity="0.27"/><line x1="583.99" y1="299.00" x2="583.99" y2="365.90" stroke="#0a0a14" stroke-width="0.9" stroke-opacity="0.68"/><line x1="600.65" y1="299.00" x2="600.65" y2="365.90" stroke="#0a0a14" stroke-width="0.9" stroke-opacity="0.90"/><line x1="617.32" y1="299.00" x2="617.32" y2="365.90" stroke="#0a0a14" stroke-width="0.9" stroke-opacity="0.45"/><line x1="633.99" y1="299.00" x2="633.99" y2="365.90" stroke="#0a0a14" stroke-width="0.9" stroke-opacity="0.90"/><line x1="650.66" y1="299.00" x2="650.66" y2="365.90" stroke="#0a0a14" stroke-width="0.9" stroke-opacity="0.72"/><line x1="667.33" y1="299.00" x2="667.33" y2="365.90" stroke="#0a0a14" stroke-width="0.9" stroke-opacity="0.72"/><line x1="683.99" y1="299.00" x2="683.99" y2="365.90" stroke="#0a0a14" stroke-width="0.9" stroke-opacity="0.54"/><line x1="700.66" y1="299.00" x2="700.66" y2="365.90" stroke="#0a0a14" stroke-width="0.9" stroke-opacity="0.54"/><line x1="717.33" y1="299.00" x2="717.33" y2="365.90" stroke="#0a0a14" stroke-width="0.9" stroke-opacity="0.90"/><line x1="734.00" y1="299.00" x2="734.00" y2="365.90" stroke="#0a0a14" stroke-width="0.9" stroke-opacity="0.54"/><line x1="750.66" y1="299.00" x2="750.66" y2="365.90" stroke="#0a0a14" stroke-width="0.9" stroke-opacity="0.11"/><line x1="767.33" y1="299.00" x2="767.33" y2="365.90" stroke="#0a0a14" stroke-width="0.9" stroke-opacity="0.54"/><line x1="784.00" y1="299.00" x2="784.00" y2="365.90" stroke="#0a0a14" stroke-width="0.9" stroke-opacity="0.90"/><line x1="800.66" y1="299.00" x2="800.66" y2="365.90" stroke="#0a0a14" stroke-width="0.9" stroke-opacity="0.27"/><line x1="817.33" y1="299.00" x2="817.33" y2="365.90" stroke="#0a0a14" stroke-width="0.9" stroke-opacity="0.72"/><line x1="833.60" y1="299.00" x2="833.60" y2="365.90" stroke="#0a0a14" stroke-width="0.9" stroke-opacity="0.90"/><line x1="166.90" y1="299.40" x2="834.40" y2="299.40" stroke="#0a0a14" stroke-width="0.9" stroke-opacity="0.62"/><line x1="166.90" y1="307.36" x2="834.40" y2="307.36" stroke="#0a0a14" stroke-width="0.9" stroke-opacity="0.40"/><line x1="166.90" y1="315.73" x2="834.40" y2="315.73" stroke="#0a0a14" stroke-width="0.9" stroke-opacity="0.30"/><line x1="166.90" y1="324.09" x2="834.40" y2="324.09" stroke="#0a0a14" stroke-width="0.9" stroke-opacity="0.50" stroke-dasharray="3.4 1"/><line x1="166.90" y1="332.45" x2="834.40" y2="332.45" stroke="#0a0a14" stroke-width="0.9" stroke-opacity="0.80" stroke-dasharray="7 0.8"/><line x1="166.90" y1="340.81" x2="834.40" y2="340.81" stroke="#0a0a14" stroke-width="0.9" stroke-opacity="0.50" stroke-dasharray="3.4 1"/><line x1="166.90" y1="349.17" x2="834.40" y2="349.17" stroke="#0a0a14" stroke-width="0.9" stroke-opacity="0.30"/><line x1="166.90" y1="357.54" x2="834.40" y2="357.54" stroke="#0a0a14" stroke-width="0.9" stroke-opacity="0.40"/><line x1="166.90" y1="365.45" x2="834.40" y2="365.45" stroke="#0a0a14" stroke-width="0.9" stroke-opacity="0.62"/></svg>
<span class="t" style="left:856.6px;top:59.0px;font-size:9.00px;color:#27304a;transform:scaleX(1.0379);">Temporal Controller</span>
<svg class="i" style="left:1183.6px;top:61.6px" width="16.6" height="8.3" viewBox="0 0 18 9"><g fill="none" stroke="#555a5e" stroke-width="0.9"><rect x="1" y="1.5" width="5.5" height="5.5"/><path d="M1 7L6.5 1.5"/><circle cx="13" cy="4.5" r="3.3"/><path d="M11 2.5L15 6.5M15 2.5L11 6.5"/></g></svg>
<span class="t" style="left:854.7px;top:75.0px;font-size:8.80px;color:#1f2326;transform:scaleX(0.9834);">Range</span>
<div style="position:absolute;left:0;top:0;transform:translate(884.50px,73.60px);width:104.60px;height:15.70px;background:#fcfcfc;border:0.9px solid #b9bbbd;border-radius:2px;box-sizing:border-box;"></div>
<span class="t" style="left:888.3px;top:74.8px;font-size:8.80px;color:#1b1e21;transform:scaleX(0.9975);">1990-01-01 00:00:00</span>
<div style="position:absolute;left:0;top:0;transform:translate(978.50px,75.00px);width:0.80px;height:13.00px;background:#dcdee0;"></div>
<svg class="i" style="left:982.0px;top:76.5px" width="5" height="10" viewBox="0 0 5 10"><path d="M0.4 3.8L2.5 1L4.6 3.8ZM0.4 6.2L2.5 9L4.6 6.2Z" fill="#7b7f83"/></svg>
<span class="t" style="left:993.0px;top:75.0px;font-size:8.80px;color:#1f2326;transform:scaleX(1.0902);">to</span>
<div style="position:absolute;left:0;top:0;transform:translate(1008.40px,73.60px);width:105.00px;height:15.70px;background:#fcfcfc;border:0.9px solid #b9bbbd;border-radius:2px;box-sizing:border-box;"></div>
<span class="t" style="left:1012.2px;top:74.8px;font-size:8.80px;color:#1b1e21;transform:scaleX(0.9914);">1990-01-01 06:00:01</span>
<div style="position:absolute;left:0;top:0;transform:translate(1104.40px,75.00px);width:0.80px;height:13.00px;background:#d6d8da;"></div>
<svg class="i" style="left:1106.3px;top:76.6px" width="5" height="10" viewBox="0 0 5 10"><path d="M0.4 3.8L2.5 1L4.6 3.8ZM0.4 6.2L2.5 9L4.6 6.2Z" fill="#7b7f83"/></svg>
<svg class="i" style="left:1119.4px;top:76.1px;" width="11.4" height="11.4" viewBox="0 0 16 16"><path d="M13.8 7.2A5.8 5.8 0 0 0 3.6 4.2" fill="none" stroke="#3f80c8" stroke-width="3"/><path d="M0.6 2L6.8 3.2L2 8.4Z" fill="#3f80c8"/><path d="M2.2 8.8A5.8 5.8 0 0 0 12.4 11.8" fill="none" stroke="#3f80c8" stroke-width="3"/><path d="M15.4 14L9.2 12.8L14 7.6Z" fill="#3f80c8"/><path d="M12.4 5A4.8 4.8 0 0 0 5 3.8" fill="none" stroke="#8fc1ee" stroke-width="0.9"/><path d="M3.6 11A4.8 4.8 0 0 0 11 12.2" fill="none" stroke="#2a62a8" stroke-width="0.8"/></svg>
<span class="t" style="left:1136.5px;top:75.0px;font-size:8.80px;color:#1f2326;transform:scaleX(0.9668);">Step</span>
<div style="position:absolute;left:0;top:0;transform:translate(1158.90px,73.60px);width:45.00px;height:15.70px;background:#fcfcfc;border:0.9px solid #b9bbbd;border-radius:2px;box-sizing:border-box;"></div>
<span class="t" style="left:1162.9px;top:74.8px;font-size:8.80px;color:#2a2622;transform:scaleX(0.9719);">1,000</span>
<div style="position:absolute;left:0;top:0;transform:translate(854.50px,95.30px);width:17.20px;height:14.40px;background:linear-gradient(180deg,#f7f8f8,#eff0f0);border:0.9px solid #bdbfc1;border-radius:2.5px;box-sizing:border-box;"></div>
<svg class="i" style="left:852.5px;top:96.4px" width="21.6" height="12" viewBox="0 0 18 10"><g fill="#0e1012"><path d="M8.6 2.2V7.8L4.8 5ZM13.2 2.2V7.8L9.2 5Z"/></g></svg>
<div style="position:absolute;left:0;top:0;transform:translate(876.57px,95.30px);width:17.20px;height:14.40px;background:linear-gradient(180deg,#f7f8f8,#eff0f0);border:0.9px solid #bdbfc1;border-radius:2.5px;box-sizing:border-box;"></div>
<svg class="i" style="left:874.6px;top:96.4px" width="21.6" height="12" viewBox="0 0 18 10"><g fill="#0e1012"><path d="M5.6 2H7.2V8H5.6ZM12.2 2.2V7.8L7.4 5Z"/></g></svg>
<div style="position:absolute;left:0;top:0;transform:translate(898.64px,95.30px);width:17.20px;height:14.40px;background:linear-gradient(180deg,#f7f8f8,#eff0f0);border:0.9px solid #bdbfc1;border-radius:2.5px;box-sizing:border-box;"></div>
<svg class="i" style="left:896.6px;top:96.4px" width="21.6" height="12" viewBox="0 0 18 10"><g fill="#0e1012"><path d="M11.6 2.2V7.8L6.2 5Z"/></g></svg>
<div style="position:absolute;left:0;top:0;transform:translate(920.71px,95.30px);width:17.20px;height:14.40px;background:linear-gradient(180deg,#f7f8f8,#eff0f0);border:0.9px solid #bdbfc1;border-radius:2.5px;box-sizing:border-box;"></div>
<svg class="i" style="left:918.7px;top:96.4px" width="21.6" height="12" viewBox="0 0 18 10"><g fill="#0e1012"><path d="M6.2 2H8.2V8H6.2ZM9.8 2H11.8V8H9.8Z"/></g></svg>
<div style="position:absolute;left:0;top:0;transform:translate(942.78px,95.30px);width:17.20px;height:14.40px;background:linear-gradient(180deg,#f7f8f8,#eff0f0);border:0.9px solid #bdbfc1;border-radius:2.5px;box-sizing:border-box;"></div>
<svg class="i" style="left:940.8px;top:96.4px" width="21.6" height="12" viewBox="0 0 18 10"><g fill="#0e1012"><path d="M6.4 2.2V7.8L11.8 5Z"/></g></svg>
<div style="position:absolute;left:0;top:0;transform:translate(964.85px,95.30px);width:17.20px;height:14.40px;background:linear-gradient(180deg,#f7f8f8,#eff0f0);border:0.9px solid #bdbfc1;border-radius:2.5px;box-sizing:border-box;"></div>
<svg class="i" style="left:962.9px;top:96.4px" width="21.6" height="12" viewBox="0 0 18 10"><g fill="#0e1012"><path d="M10.8 2H12.4V8H10.8ZM5.8 2.2V7.8L10.6 5Z"/></g></svg>
<div style="position:absolute;left:0;top:0;transform:translate(986.92px,95.30px);width:17.20px;height:14.40px;background:linear-gradient(180deg,#f7f8f8,#eff0f0);border:0.9px solid #bdbfc1;border-radius:2.5px;box-sizing:border-box;"></div>
<svg class="i" style="left:984.9px;top:96.4px" width="21.6" height="12" viewBox="0 0 18 10"><g fill="#0e1012"><path d="M4.8 2.2V7.8L8.8 5ZM9.4 2.2V7.8L13.2 5Z"/></g></svg>
<div style="position:absolute;left:0;top:0;transform:translate(1008.40px,98.90px);width:7.60px;height:7.60px;background:#f9fafa;border:0.8px solid #d0d2d4;border-radius:1.5px;box-sizing:border-box;"></div>
<span class="t" style="left:1020.0px;top:96.0px;font-size:9.00px;color:#1b1e21;transform:scaleX(0.9990);">Loop</span>
<div style="position:absolute;left:0;top:0;transform:translate(1053.00px,101.80px);width:150.00px;height:1.60px;background:#c8cacc;border-radius:1px;"></div>
<div style="position:absolute;left:0;top:0;transform:translate(1048.50px,98.80px);width:8.00px;height:7.80px;background:#f8f9f9;border:0.9px solid #b4b6b8;border-radius:50%;box-sizing:border-box;"></div>
<span class="t" style="left:855.0px;top:113.6px;font-size:8.80px;color:#2d3242;transform:scaleX(1.0134);">1990-01-01 00:00:00 to 1990-01-01 01:00:00</span>
<svg class="i" style="left:943px;top:168.2px" width="8.6" height="13" viewBox="0 0 10 15"><path d="M0.8 0.8V11.6L3.4 9.4L5.2 13.6L7 12.8L5.2 8.8H8.6Z" fill="#3a3d40" stroke="#6b6e71" stroke-width="0.5"/></svg>
<div style="position:absolute;left:0;top:0;transform:translate(854.00px,192.00px);width:346.00px;height:0.90px;background:#b9bbbd;"></div>
<div style="position:absolute;left:0;top:0;transform:translate(854.00px,192.90px);width:8.30px;height:7.90px;background:#fbfbfb;"></div>
<div style="position:absolute;left:0;top:0;transform:translate(862.30px,192.90px);width:0.90px;height:7.90px;background:#b9bbbd;"></div>
<div style="position:absolute;left:0;top:0;transform:translate(863.20px,192.90px);width:249.00px;height:7.90px;background:linear-gradient(180deg,#ffffff,#f5f5f5);"></div>
<div style="position:absolute;left:0;top:0;transform:translate(1112.10px,192.90px);width:80.00px;height:7.90px;background:#e5e5e5;"></div>
<div style="position:absolute;left:0;top:0;transform:translate(1192.00px,192.90px);width:0.90px;height:7.90px;background:#b9bbbd;"></div>
<div style="position:absolute;left:0;top:0;transform:translate(1192.90px,192.90px);width:7.10px;height:7.90px;background:#fbfbfb;"></div>
<svg class="i" style="left:856.8px;top:194.3px" width="3" height="4.6" viewBox="0 0 4 5"><path d="M3.6 0.2V4.8L0.4 2.5Z" fill="#55585b"/></svg>
<svg class="i" style="left:1195.2px;top:194.3px" width="3" height="4.6" viewBox="0 0 4 5"><path d="M0.4 0.2V4.8L3.6 2.5Z" fill="#55585b"/></svg>
<div style="position:absolute;left:0;top:0;transform:translate(1022.50px,202.00px);width:1.00px;height:1.00px;background:#b5b7b9;"></div>
<div style="position:absolute;left:0;top:0;transform:translate(1024.70px,202.00px);width:1.00px;height:1.00px;background:#b5b7b9;"></div>
<div style="position:absolute;left:0;top:0;transform:translate(1026.90px,202.00px);width:1.00px;height:1.00px;background:#b5b7b9;"></div>
<div style="position:absolute;left:0;top:0;transform:translate(1029.10px,202.00px);width:1.00px;height:1.00px;background:#b5b7b9;"></div>
<div style="position:absolute;left:0;top:0;transform:translate(1031.30px,202.00px);width:1.00px;height:1.00px;background:#b5b7b9;"></div>
<span class="t" style="left:856.8px;top:205.0px;font-size:9.20px;color:#222734;transform:scaleX(0.9778);">Layer Styling</span>
<svg class="i" style="left:1183.4px;top:207.4px" width="16.6" height="8.3" viewBox="0 0 18 9"><g fill="none" stroke="#555a5e" stroke-width="0.9"><rect x="1" y="1.5" width="5.5" height="5.5"/><path d="M2.5 5.5L5 3M3.4 2.8H5.2V4.6"/><rect x="9" y="1" width="6.5" height="6.5"/><path d="M10 2L14.5 6.5M14.5 2L10 6.5"/></g></svg>
<div style="position:absolute;left:0;top:0;transform:translate(856.40px,220.40px);width:342.60px;height:16.60px;background:#fcfcfc;border:0.9px solid #b9bbbd;border-radius:2px;box-sizing:border-box;"></div>
<svg class="i" style="left:861.5px;top:225.0px;" width="8" height="8" viewBox="0 0 16 16"><rect x="0.6" y="0.6" width="14.8" height="14.8" fill="#b5d5ee"/><path d="M8.6 0.8H15.2V7.4Z" fill="#d9e9f6"/><path d="M0.6 1.4H15.2M0.6 10.4H10.4M4.8 0.8V15.4M10.4 5.6V15.2M4.8 10.4L14.6 1.4M0.6 15H10.4" stroke="#2f6bb0" stroke-width="1.5" fill="none"/></svg>
<span class="t" style="left:871.9px;top:222.4px;font-size:8.80px;color:#1b1e21;transform:scaleX(1.0064);">trap_steady_05_3D</span>
<svg class="i" style="left:1188.5px;top:228px" width="5" height="3.4" viewBox="0 0 6 4"><path d="M0.3 0.5H5.7L3 3.6Z" fill="#6d7175"/></svg>
<div style="position:absolute;left:0;top:0;transform:translate(881.00px,260.40px);width:309.00px;height:0.90px;background:#c3c5c7;"></div>
<div style="position:absolute;left:0;top:0;transform:translate(882.00px,242.80px);width:30.40px;height:18.60px;background:#fcfcfc;"></div>
<div style="position:absolute;left:0;top:0;transform:translate(942.90px,243.50px);width:0.90px;height:17.00px;background:#c9cbcd;"></div>
<div style="position:absolute;left:0;top:0;transform:translate(973.60px,243.50px);width:0.90px;height:17.00px;background:#c9cbcd;"></div>
<div style="position:absolute;left:0;top:0;transform:translate(1003.90px,243.50px);width:0.90px;height:17.00px;background:#c9cbcd;"></div>
<div style="position:absolute;left:0;top:0;transform:translate(1034.20px,243.50px);width:0.90px;height:17.00px;background:#c9cbcd;"></div>
<div style="position:absolute;left:0;top:0;transform:translate(912.30px,242.80px);width:122.30px;height:0.90px;background:#dfe0e2;"></div>
<svg class="i" style="left:860.4px;top:245.2px;" width="14" height="14" viewBox="0 0 16 16"><path d="M1.4 9.4L7.6 5L11 9.4L5 14Z" fill="#7fa2d8"/><path d="M1.4 9.4L3.8 7.7L7.4 12.2L5 14Z" fill="#e06a9a"/><path d="M3.8 7.7L5.6 6.4L9.2 10.8L7.4 12.2Z" fill="#f0c85a"/><path d="M2.6 10.8L5.4 12.8M4.4 8.6L8 12" stroke="#c44a7a" stroke-width="0.7"/><path d="M7.6 5L11 9.4" stroke="#8a8d90" stroke-width="1.6"/><path d="M9.6 7L14.8 2" stroke="#c9a56a" stroke-width="1.9" stroke-linecap="round"/></svg>
<svg class="i" style="left:889.3px;top:244.9px;" width="13" height="13" viewBox="0 0 16 16"><path d="M4.2 3.4L13.6 13.2" stroke="#1e2124" stroke-width="1.9" stroke-linecap="round"/><path d="M1.4 5.4L3.4 2.2L7.4 1.4L5.4 3.4L6 5L3.6 6.8Z" fill="#1e2124"/><path d="M11.8 4.4L4.6 11.8" stroke="#e8762a" stroke-width="2.3" stroke-linecap="round"/><path d="M4.8 11.6L2.2 14.4" stroke="#3f78c0" stroke-width="1.7" stroke-linecap="round"/><path d="M10.4 2.6L13.6 5.8L14.8 4.6L11.6 1.4Z" fill="#1e2124"/></svg>
<svg class="i" style="left:919.6px;top:244.7px;" width="13.6" height="13.6" viewBox="0 0 16 16"><defs><linearGradient id="tcg" x1="0" y1="0" x2="1" y2="1"><stop offset="0" stop-color="#6db6e8"/><stop offset="0.44" stop-color="#86cdea"/><stop offset="0.5" stop-color="#6fd75a"/><stop offset="0.58" stop-color="#9be05a"/><stop offset="0.66" stop-color="#f3d65e"/><stop offset="0.82" stop-color="#f6c45c"/><stop offset="0.9" stop-color="#f08f7c"/><stop offset="1" stop-color="#ee7e78"/></linearGradient></defs><rect x="0.6" y="0.6" width="14.8" height="14.8" fill="url(#tcg)"/><path d="M1 5L3 1M1 9L6 1" stroke="#4e9fe0" stroke-width="0.8" stroke-dasharray="1.4 1.2"/></svg>
<svg class="i" style="left:951.0px;top:246.0px;" width="12.4" height="12.4" viewBox="0 0 16 16"><path d="M2.2 2.2L11 11" stroke="#15181b" stroke-width="1.5"/><path d="M14.2 14.2L7.6 12.2L12.2 7.6Z" fill="#15181b"/></svg>
<svg class="i" style="left:982.1px;top:247.0px;" width="10.6" height="10.6" viewBox="0 0 16 16"><rect x="1.6" y="1.6" width="12.8" height="12.8" fill="#fff" stroke="#1e2124" stroke-width="1.5"/><path d="M6 1.6V14.4M10 1.6V14.4M1.6 6H14.4M1.6 10H14.4" stroke="#1e2124" stroke-width="1.4"/></svg>
<svg class="i" style="left:1012.4px;top:244.4px;" width="12.4" height="12.4" viewBox="0 0 16 16"><circle cx="8.6" cy="3.6" r="2.6" fill="#15181b"/><path d="M1.4 8L8 4.8L14.6 8L8 11.4Z" fill="#15181b"/><path d="M8 10V14.4" stroke="#15181b" stroke-width="1.8"/><path d="M4.6 12.4L8 10.6L11.4 12.4L8 14.6Z" fill="#2a2d30"/><path d="M0.6 9.6H4M12 9.6H15.4" stroke="#8a8d90" stroke-width="0.8" stroke-dasharray="1 0.8"/></svg>
<div style="position:absolute;left:0;top:0;transform:translate(856.20px,262.50px);width:23.80px;height:341.30px;background:#5e5e5e;"></div>
<svg class="i" style="left:858.3px;top:264.7px;" width="14.6" height="14.6" viewBox="0 0 16 16"><path d="M8 1L14.8 4.4V11.4L8 15.2L1.2 11.4V4.4Z" fill="#e8e8e8"/><path d="M8 0.8L14.8 4.4L8 8L1.2 4.4Z" fill="#e25a6a"/><path d="M1.2 4.4L8 8V15.2L1.2 11.4Z" fill="#6cc04a"/><path d="M14.8 4.4L8 8V15.2L14.8 11.4Z" fill="#f0cc30"/><path d="M8 2.6L11.6 4.4L8 6.2L4.4 4.4Z" fill="#f0a0a8"/><path d="M3 7.4L6 9V12.4L3 10.8Z" fill="#9ade6a"/><path d="M10.4 9.2L13 7.8V11L10.4 12.4Z" fill="#f8e48a"/></svg>
<svg class="i" style="left:858.3px;top:284.4px;" width="14.6" height="14.6" viewBox="0 0 16 16"><path d="M4.6 5.6V3.6Q4.6 1 6.4 1Q8 1 8 3.2Q8 1 9.6 1Q11.4 1 11.4 3.6V5.6" fill="none" stroke="#e0506e" stroke-width="1.4"/><path d="M4.6 4V11M8 3V11M11.4 4V11" stroke="#e8a030" stroke-width="1.3" fill="none"/><rect x="1" y="10" width="6.4" height="5" fill="#f2cf3a" stroke="#d9a820" stroke-width="0.5"/><rect x="8.8" y="10" width="6.2" height="5" fill="#8fc6ee" stroke="#d9a820" stroke-width="0.5"/></svg>
<svg class="i" style="left:859.5px;top:305.2px;" width="13" height="13" viewBox="0 0 16 16"><path d="M1.6 6.8L6.2 1.4L6.8 4Q10 3.4 10.8 6.4" stroke="#62b04a" stroke-width="1.9" fill="none"/><path d="M3.6 7.2Q6 7.6 7.6 5.6" stroke="#5a8ed0" stroke-width="1.4" fill="none"/><path d="M7.4 9.6L12.4 9L11.6 14.4Z" fill="#f08a2a"/><circle cx="12.4" cy="11.6" r="2.3" fill="none" stroke="#e8542e" stroke-width="1.2"/><circle cx="9" cy="11" r="1" fill="#e8542e"/></svg>
<div style="position:absolute;left:0;top:0;transform:translate(1190.80px,242.20px);width:8.00px;height:341.00px;background:#fbfbfb;"></div>
<div style="position:absolute;left:0;top:0;transform:translate(1190.80px,489.70px);width:8.00px;height:85.30px;background:#e3e3e3;"></div>
<svg class="i" style="left:1192.2px;top:243.6px" width="5.4" height="3.8" viewBox="0 0 5 4"><path d="M0.2 3.8H4.8L2.5 0.4Z" fill="#55585b"/></svg>
<svg class="i" style="left:1192.2px;top:577.4px" width="5.4" height="3.8" viewBox="0 0 5 4"><path d="M0.2 0.2H4.8L2.5 3.6Z" fill="#6a6d70"/></svg>
<div style="position:absolute;left:0;top:0;transform:translate(881.30px,267.40px);width:309.40px;height:120.00px;background:#fcfcfc;border:0.8px solid #b6b8ba;border-bottom-color:#e4e5e6;box-sizing:border-box;"></div>
<div style="position:absolute;left:0;top:0;transform:translate(881.30px,267.40px);width:309.40px;height:15.20px;background:linear-gradient(180deg,#fbfbfb,#efefef);border:0.8px solid #b6b8ba;box-sizing:border-box;"></div>
<span class="t" style="left:884.2px;top:268.8px;font-size:8.80px;color:#1f2326;transform:scaleX(1.0050);">Groups</span>
<span class="t" style="left:897.3px;top:281.9px;font-size:8.80px;color:#1b1e21;transform:scaleX(1.0313);">Bed Elevation</span>
<span class="t" style="left:897.3px;top:295.0px;font-size:8.80px;color:#1b1e21;transform:scaleX(1.1066);">temperature</span>
<svg class="i" style="left:886.5px;top:299.6px" width="4" height="5" viewBox="0 0 4 5"><path d="M0.6 0.4V4.6L3.4 2.5Z" fill="#8a8e92"/></svg>
<div style="position:absolute;left:0;top:0;transform:translate(1167.00px,297.30px);width:9.60px;height:9.40px;background:linear-gradient(90deg,#c3c4c5,#e9eaea);"></div>
<span class="t" style="left:897.3px;top:307.0px;font-size:8.80px;color:#1b1e21;transform:scaleX(1.0735);">velocity</span>
<svg class="i" style="left:886.5px;top:311.6px" width="4" height="5" viewBox="0 0 4 5"><path d="M0.6 0.4V4.6L3.4 2.5Z" fill="#8a8e92"/></svg>
<div style="position:absolute;left:0;top:0;transform:translate(1167.00px,309.30px);width:9.60px;height:9.40px;background:linear-gradient(90deg,#c3c4c5,#e9eaea);"></div>
<span class="t" style="left:897.3px;top:319.6px;font-size:8.80px;color:#1b1e21;transform:scaleX(1.0983);">water depth</span>
<svg class="i" style="left:886.5px;top:324.2px" width="4" height="5" viewBox="0 0 4 5"><path d="M0.6 0.4V4.6L3.4 2.5Z" fill="#8a8e92"/></svg>
<div style="position:absolute;left:0;top:0;transform:translate(1167.00px,321.90px);width:9.60px;height:9.40px;background:linear-gradient(90deg,#c3c4c5,#e9eaea);"></div>
<span class="t" style="left:897.3px;top:332.1px;font-size:8.80px;color:#1b1e21;transform:scaleX(1.0609);">water surface elevation</span>
<svg class="i" style="left:886.5px;top:336.7px" width="4" height="5" viewBox="0 0 4 5"><path d="M0.6 0.4V4.6L3.4 2.5Z" fill="#8a8e92"/></svg>
<div style="position:absolute;left:0;top:0;transform:translate(1167.00px,334.40px);width:9.60px;height:9.40px;background:linear-gradient(90deg,#c3c4c5,#e9eaea);"></div>
<svg class="i" style="left:1167.0px;top:284.0px;" width="10" height="10" viewBox="0 0 16 16"><defs><linearGradient id="tcg" x1="0" y1="0" x2="1" y2="1"><stop offset="0" stop-color="#6db6e8"/><stop offset="0.44" stop-color="#86cdea"/><stop offset="0.5" stop-color="#6fd75a"/><stop offset="0.58" stop-color="#9be05a"/><stop offset="0.66" stop-color="#f3d65e"/><stop offset="0.82" stop-color="#f6c45c"/><stop offset="0.9" stop-color="#f08f7c"/><stop offset="1" stop-color="#ee7e78"/></linearGradient></defs><rect x="0.6" y="0.6" width="14.8" height="14.8" fill="url(#tcg)"/><path d="M1 5L3 1M1 9L6 1" stroke="#4e9fe0" stroke-width="0.8" stroke-dasharray="1.4 1.2"/></svg>
<svg class="i" style="left:1178.5px;top:309.5px" width="9" height="9" viewBox="0 0 9 9"><path d="M1 1L7 7" stroke="#5a5e62" stroke-width="0.8" stroke-dasharray="1.6 0.8"/><path d="M8 8L4.8 7L7 4.8Z" fill="#33373b"/></svg>
<span class="t" style="left:882.0px;top:390.6px;font-size:8.80px;color:#1f2326;transform:scaleX(1.0405);">Dataset in selected group(s)</span>
<svg class="i" style="left:884px;top:412px" width="7" height="6" viewBox="0 0 7 6"><path d="M0.4 0.6H6.6L3.5 5.2Z" fill="#33373b"/></svg>
<span class="t" style="left:896.3px;top:407.7px;font-size:8.80px;color:#22262a;transform:scaleX(1.0592);text-shadow:0.25px 0 0 #22262a;">Dataset group Metadata</span>
<div style="position:absolute;left:0;top:0;transform:translate(881.50px,422.60px);width:309.00px;height:161.00px;background:#edeeef;border:0.8px solid #e1e2e4;box-sizing:border-box;"></div>
<span class="t" style="left:889.5px;top:430.0px;font-size:10.30px;color:#1f2326;font-weight:bold;transform:scaleX(0.9922);">Scalar dataset</span>
<span class="t" style="left:889.5px;top:510.3px;font-size:10.30px;color:#1f2326;font-weight:bold;transform:scaleX(1.0155);">Vector dataset</span>
<span class="t" style="left:890.5px;top:445.0px;font-size:8.80px;color:#1f2326;transform:scaleX(1.0469);">Mesh type</span>
<span class="t" style="left:933.2px;top:445.0px;font-size:8.80px;color:#1f2326;transform:scaleX(1.0223);">faces</span>
<span class="t" style="left:890.5px;top:458.9px;font-size:8.80px;color:#1f2326;transform:scaleX(1.0487);">Data type</span>
<span class="t" style="left:934.5px;top:458.9px;font-size:8.80px;color:#1f2326;transform:scaleX(1.0555);">vertices</span>
<span class="t" style="left:890.5px;top:472.7px;font-size:8.80px;color:#1f2326;transform:scaleX(1.0526);">Is vector</span>
<span class="t" style="left:934.5px;top:472.7px;font-size:8.80px;color:#1f2326;transform:scaleX(0.9779);">No</span>
<span class="t" style="left:890.5px;top:486.6px;font-size:8.80px;color:#1f2326;transform:scaleX(1.0904);">name</span>
<span class="t" style="left:934.5px;top:486.6px;font-size:8.80px;color:#1f2326;transform:scaleX(1.0313);">Bed Elevation</span>
<span class="t" style="left:890.5px;top:524.8px;font-size:8.80px;color:#1f2326;transform:scaleX(1.0469);">Mesh type</span>
<span class="t" style="left:933.2px;top:524.8px;font-size:8.80px;color:#1f2326;transform:scaleX(1.0223);">faces</span>
<span class="t" style="left:890.5px;top:538.6px;font-size:8.80px;color:#1f2326;transform:scaleX(1.0487);">Data type</span>
<span class="t" style="left:934.5px;top:538.6px;font-size:8.80px;color:#1f2326;transform:scaleX(1.0529);">volumes</span>
<span class="t" style="left:890.5px;top:552.5px;font-size:8.80px;color:#1f2326;transform:scaleX(1.0526);">Is vector</span>
<span class="t" style="left:934.5px;top:552.5px;font-size:8.80px;color:#1f2326;transform:scaleX(0.9403);">Yes</span>
<span class="t" style="left:890.5px;top:566.3px;font-size:8.80px;color:#1f2326;transform:scaleX(1.0904);">name</span>
<span class="t" style="left:934.5px;top:566.3px;font-size:8.80px;color:#1f2326;transform:scaleX(1.0565);">velocity</span>
<div style="position:absolute;left:889px;top:580.5px;width:120px;height:2.8px;overflow:hidden"><span class="t" style="left:0;top:-0.5px;font-size:9.6px;font-weight:bold;color:#4a4e52;transform:scaleX(1.15)">Scalar dataset</span></div>
<div style="position:absolute;left:0;top:0;transform:translate(881.60px,588.40px);width:15.40px;height:14.20px;background:#f1f2f2;border:0.9px solid #cbcdcf;border-radius:2px;box-sizing:border-box;"></div>
<div style="position:absolute;left:0;top:0;transform:translate(901.00px,588.40px);width:15.60px;height:14.20px;background:#f1f2f2;border:0.9px solid #a9abad;border-radius:2px;box-sizing:border-box;"></div>
<svg class="i" style="left:884.9px;top:591.3px;" width="9.4" height="9.4" viewBox="0 0 16 16"><path d="M1.6 6.4L7 1.8V4.6H9.4Q14 4.6 14 9Q14 13.2 9.4 13.2H7.4V10.4H9.4Q11.2 10.4 11.2 9Q11.2 7.6 9.4 7.6H7V10.6Z" fill="#f06a1e"/></svg>
<svg class="i" style="left:904.3px;top:591.3px;" width="9.4" height="9.4" viewBox="0 0 16 16"><path d="M14.4 6.4L9 1.8V4.6H6.6Q2 4.6 2 9Q2 13.2 6.6 13.2H8.6V10.4H6.6Q4.8 10.4 4.8 9Q4.8 7.6 6.6 7.6H9V10.6Z" fill="#5da83a"/><path d="M3 12L6 14.4" stroke="#8a8e92" stroke-width="1"/></svg>
<div style="position:absolute;left:0;top:0;transform:translate(1073.40px,592.30px);width:7.60px;height:7.60px;background:#fdfdfd;border-right:0.8px solid #9a9c9e;box-sizing:border-box;"></div>
<svg class="i" style="left:1073.6px;top:592.5px" width="7" height="7" viewBox="0 0 7 7"><path d="M1 3.4L2.8 5.6L5.6 1.2" fill="none" stroke="#111" stroke-width="1.5"/></svg>
<span class="t" style="left:1085.0px;top:589.2px;font-size:9.20px;color:#181b1e;transform:scaleX(0.9838);text-shadow:0.12px 0 0 #181b1e;">Live update</span>
<div style="position:absolute;left:0;top:0;transform:translate(1141.00px,588.60px);width:58.00px;height:14.80px;background:#f6f7f7;border:0.8px solid #dfe0e2;border-bottom:1px solid #aeb0b2;border-radius:2.5px;box-sizing:border-box;"></div>
<svg class="i" style="left:1143.6px;top:590.6px" width="11" height="10.6" viewBox="0 0 10 9"><path d="M0.6 5L1.8 4.2L3.4 6.2L8.4 0.6L9.6 1.2L3.8 8.6Z" fill="#5f8a3c" stroke="#4a5e3a" stroke-width="0.5"/></svg>
<span class="t" style="left:1154.3px;top:589.2px;font-size:9.20px;color:#181b1e;transform:scaleX(1.0291);"><u>A</u>ppliquer</span>
<div style="position:absolute;left:0;top:0;transform:translate(0.00px,624.80px);width:1200.00px;height:1.20px;background:#c9cacc;"></div>
<div style="position:absolute;left:0;top:0;transform:translate(1.30px,608.60px);width:163.70px;height:16.00px;background:#fcfcfc;border-radius:2px;border-left:0.9px solid #c3c5c7;border-top:0.8px solid #e3e4e6;box-sizing:border-box;"></div>
<svg class="i" style="left:6.2px;top:612.2px" width="9" height="9" viewBox="0 0 8 8"><circle cx="3.2" cy="3.2" r="2.3" fill="none" stroke="#7b7f83" stroke-width="0.8"/><path d="M5 5L7.2 7.2" stroke="#7b7f83" stroke-width="0.9"/></svg>
<span class="t" style="left:20.0px;top:609.8px;font-size:8.80px;color:#7b7f83;transform:scaleX(1.0252);">Type to locate (Ctrl+K)</span>
<span class="t" style="left:672.8px;top:609.5px;font-size:7.40px;color:#1f2326;transform:scaleX(0.9724);">Coordinate</span>
<div style="position:absolute;left:0;top:0;transform:translate(711.00px,609.20px);width:49.20px;height:14.40px;background:#fcfcfc;border:0.8px solid #c3c5c7;border-radius:2px;box-sizing:border-box;"></div>
<span class="t" style="left:714.6px;top:609.4px;font-size:7.40px;color:#23272b;transform:scaleX(0.9397);">1014.7,236.3</span>
<svg class="i" style="left:762.6px;top:611.3px;" width="10.4" height="10.4" viewBox="0 0 16 16"><path d="M3.6 5.6Q3.6 1.6 8 1.6Q12.4 1.6 12.4 5.6V10Q12.4 14.4 8 14.4Q3.6 14.4 3.6 10Z" fill="#fdfdfd" stroke="#2e3134" stroke-width="1.3"/><path d="M3.6 7H12.4M8 1.6V7" stroke="#2e3134" stroke-width="1.1"/><path d="M1 3L3 1M15 3L13 1M1.6 13.4L3.2 15" stroke="#2e3134" stroke-width="1"/></svg>
<span class="t" style="left:782.5px;top:609.5px;font-size:7.40px;color:#1f2326;transform:scaleX(0.8914);">Scale</span>
<div style="position:absolute;left:0;top:0;transform:translate(800.40px,608.30px);width:60.00px;height:16.40px;background:#fcfcfc;border-radius:2px;border-top:0.8px solid #d3d5d7;box-sizing:border-box;"></div>
<span class="t" style="left:804.0px;top:609.4px;font-size:7.40px;color:#7a7468;transform:scaleX(0.8837);">1:3778</span>
<svg class="i" style="left:850.6px;top:615px" width="5.4" height="3.6" viewBox="0 0 6 4"><path d="M0.3 0.5H5.7L3 3.6Z" fill="#55585b"/></svg>
<svg class="i" style="left:867.8px;top:611.4px;" width="10.4" height="10.4" viewBox="0 0 16 16"><path d="M4.6 7V4.6Q4.6 1.6 7.6 1.6Q10.2 1.6 10.6 3.6" fill="none" stroke="#7b7d7f" stroke-width="1.6"/><rect x="2.6" y="7" width="10.8" height="7.6" rx="1" fill="#7b7d7f"/></svg>
<span class="t" style="left:883.0px;top:609.8px;font-size:7.40px;color:#1f2326;transform:scaleX(1.0022);">Magnifier</span>
<div style="position:absolute;left:0;top:0;transform:translate(916.20px,608.40px);width:58.80px;height:16.20px;background:#fcfcfc;border-radius:2px;border-top:0.9px solid #b9bbbd;border-left:0.8px solid #d3d5d7;border-right:0.8px solid #d3d5d7;box-sizing:border-box;"></div>
<span class="t" style="left:919.5px;top:609.6px;font-size:7.40px;color:#a8a49a;transform:scaleX(0.8983);">100%</span>
<div style="position:absolute;left:0;top:0;transform:translate(964.30px,609.60px);width:0.80px;height:14.00px;background:#e0e1e3;"></div>
<svg class="i" style="left:967.3px;top:611.9px" width="5" height="10" viewBox="0 0 5 10"><path d="M0.4 3.8L2.5 1L4.6 3.8ZM0.4 6.2L2.5 9L4.6 6.2Z" fill="#7b7f83"/></svg>
<span class="t" style="left:982.5px;top:609.8px;font-size:7.40px;color:#1f2326;transform:scaleX(0.9615);">Rotation</span>
<div style="position:absolute;left:0;top:0;transform:translate(1015.00px,608.40px);width:56.60px;height:16.20px;background:#fcfcfc;border-radius:2px;border-top:0.9px solid #b9bbbd;border-left:0.8px solid #d3d5d7;border-right:0.8px solid #d3d5d7;box-sizing:border-box;"></div>
<span class="t" style="left:1018.0px;top:609.4px;font-size:7.40px;color:#23272b;transform:scaleX(0.9150);">0,0 °</span>
<div style="position:absolute;left:0;top:0;transform:translate(1062.30px,609.60px);width:0.80px;height:14.00px;background:#e0e1e3;"></div>
<svg class="i" style="left:1064.9px;top:611.9px" width="5" height="10" viewBox="0 0 5 10"><path d="M0.4 3.8L2.5 1L4.6 3.8ZM0.4 6.2L2.5 9L4.6 6.2Z" fill="#7b7f83"/></svg>
<div style="position:absolute;left:0;top:0;transform:translate(1076.50px,612.80px);width:8.00px;height:8.00px;background:#fcfcfc;border:0.7px solid #8d9194;box-sizing:border-box;"></div>
<svg class="i" style="left:1077px;top:613.3px" width="7" height="7" viewBox="0 0 7 7"><path d="M1.2 3.6L2.9 5.4L5.8 1.4" fill="none" stroke="#222" stroke-width="1.1"/></svg>
<span class="t" style="left:1088.6px;top:609.6px;font-size:7.60px;color:#1b1e21;transform:scaleX(0.8987);">Render</span>
<svg class="i" style="left:1121.0px;top:611.7px;" width="10.6" height="10.6" viewBox="0 0 16 16"><path d="M8 0.8L15.4 8L8 15.2L0.6 8Z" fill="#e9eaea" stroke="#5c5f62" stroke-width="1.2"/><path d="M1 8H15M8 1V15" stroke="#5c5f62" stroke-width="1.1"/><ellipse cx="8" cy="8" rx="3.2" ry="6" fill="none" stroke="#5c5f62" stroke-width="0.9"/><path d="M3.4 5H12.6M3.4 11H12.6" stroke="#5c5f62" stroke-width="0.9"/></svg>
<span class="t" style="left:1133.6px;top:609.8px;font-size:7.60px;color:#1b1e21;transform:scaleX(0.8431);">EPSG:32620</span>
<svg class="i" style="left:1185.8px;top:611.2px;" width="11.5" height="11.5" viewBox="0 0 16 16"><path d="M1.4 7Q1.4 2 8 2Q14.6 2 14.6 7Q14.6 12 8 12L5.4 12L2.6 14.6L3.4 11.2Q1.4 9.6 1.4 7Z" fill="#4d5053"/></svg>
</body></html>
